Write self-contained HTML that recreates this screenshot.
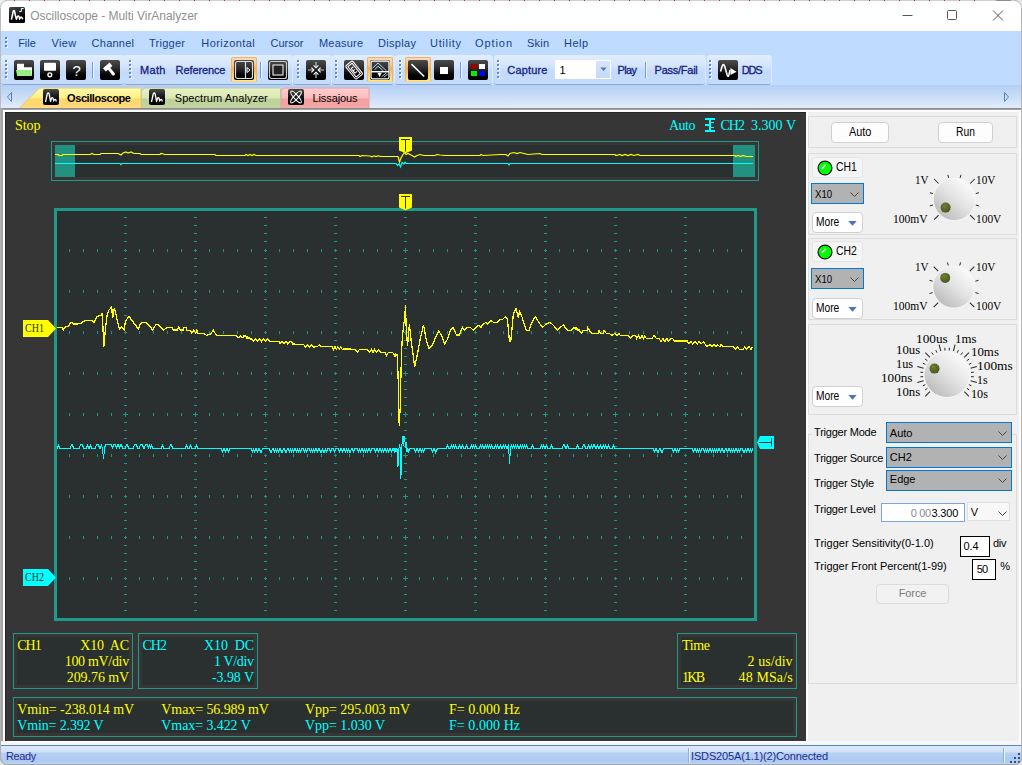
<!DOCTYPE html>
<html><head><meta charset="utf-8"><title>Oscilloscope - Multi VirAnalyzer</title>
<style>
html,body{margin:0;padding:0;background:#fff;}
body{width:1022px;height:765px;overflow:hidden;position:relative;font-family:"Liberation Sans",sans-serif;}
.b{position:absolute;display:block;}
.t{position:absolute;white-space:pre;display:block;}
svg{overflow:visible;}
</style></head><body>
<div class="b" style="left:0px;top:0px;width:1022px;height:765px;background:#fff;"></div>
<div class="b" style="left:0px;top:0px;width:1022px;height:1px;background:#cfcfcf;"></div>
<div class="b" style="left:996px;top:0px;width:15px;height:1px;background:#8e8e8e;"></div>
<div class="b" style="left:14px;top:0px;width:1px;height:1px;background:#e02020;"></div>
<div class="b" style="left:29px;top:0px;width:1px;height:1px;background:#e02020;"></div>
<div class="b" style="left:44px;top:0px;width:1px;height:1px;background:#e02020;"></div>
<div class="b" style="left:59px;top:0px;width:1px;height:1px;background:#e02020;"></div>
<div class="b" style="left:74px;top:0px;width:1px;height:1px;background:#e02020;"></div>
<div class="b" style="left:89px;top:0px;width:1px;height:1px;background:#e02020;"></div>
<div class="b" style="left:104px;top:0px;width:1px;height:1px;background:#e02020;"></div>
<div class="b" style="left:119px;top:0px;width:1px;height:1px;background:#e02020;"></div>
<div class="b" style="left:134px;top:0px;width:1px;height:1px;background:#e02020;"></div>
<div class="b" style="left:149px;top:0px;width:1px;height:1px;background:#e02020;"></div>
<div class="b" style="left:164px;top:0px;width:1px;height:1px;background:#e02020;"></div>
<div class="b" style="left:179px;top:0px;width:1px;height:1px;background:#e02020;"></div>
<div class="b" style="left:194px;top:0px;width:1px;height:1px;background:#e02020;"></div>
<div class="b" style="left:209px;top:0px;width:1px;height:1px;background:#e02020;"></div>
<div class="b" style="left:224px;top:0px;width:1px;height:1px;background:#e02020;"></div>
<div class="b" style="left:239px;top:0px;width:1px;height:1px;background:#e02020;"></div>
<div class="b" style="left:254px;top:0px;width:1px;height:1px;background:#e02020;"></div>
<div class="b" style="left:269px;top:0px;width:1px;height:1px;background:#e02020;"></div>
<div class="b" style="left:284px;top:0px;width:1px;height:1px;background:#e02020;"></div>
<div class="b" style="left:299px;top:0px;width:1px;height:1px;background:#e02020;"></div>
<div class="b" style="left:314px;top:0px;width:1px;height:1px;background:#e02020;"></div>
<div class="b" style="left:329px;top:0px;width:1px;height:1px;background:#e02020;"></div>
<div class="b" style="left:344px;top:0px;width:1px;height:1px;background:#e02020;"></div>
<div class="b" style="left:359px;top:0px;width:1px;height:1px;background:#e02020;"></div>
<div class="b" style="left:374px;top:0px;width:1px;height:1px;background:#e02020;"></div>
<div class="b" style="left:389px;top:0px;width:1px;height:1px;background:#e02020;"></div>
<div class="b" style="left:404px;top:0px;width:1px;height:1px;background:#e02020;"></div>
<div class="b" style="left:419px;top:0px;width:1px;height:1px;background:#e02020;"></div>
<div class="b" style="left:434px;top:0px;width:1px;height:1px;background:#e02020;"></div>
<div class="b" style="left:449px;top:0px;width:1px;height:1px;background:#e02020;"></div>
<div class="b" style="left:464px;top:0px;width:1px;height:1px;background:#e02020;"></div>
<div class="b" style="left:479px;top:0px;width:1px;height:1px;background:#e02020;"></div>
<div class="b" style="left:494px;top:0px;width:1px;height:1px;background:#e02020;"></div>
<div class="b" style="left:509px;top:0px;width:1px;height:1px;background:#e02020;"></div>
<div class="b" style="left:524px;top:0px;width:1px;height:1px;background:#e02020;"></div>
<div class="b" style="left:539px;top:0px;width:1px;height:1px;background:#e02020;"></div>
<div class="b" style="left:554px;top:0px;width:1px;height:1px;background:#e02020;"></div>
<div class="b" style="left:569px;top:0px;width:1px;height:1px;background:#e02020;"></div>
<div class="b" style="left:584px;top:0px;width:1px;height:1px;background:#e02020;"></div>
<div class="b" style="left:599px;top:0px;width:1px;height:1px;background:#e02020;"></div>
<div class="b" style="left:614px;top:0px;width:1px;height:1px;background:#e02020;"></div>
<div class="b" style="left:629px;top:0px;width:1px;height:1px;background:#e02020;"></div>
<div class="b" style="left:644px;top:0px;width:1px;height:1px;background:#e02020;"></div>
<div class="b" style="left:659px;top:0px;width:1px;height:1px;background:#e02020;"></div>
<div class="b" style="left:674px;top:0px;width:1px;height:1px;background:#e02020;"></div>
<div class="b" style="left:689px;top:0px;width:1px;height:1px;background:#e02020;"></div>
<div class="b" style="left:704px;top:0px;width:1px;height:1px;background:#e02020;"></div>
<div class="b" style="left:719px;top:0px;width:1px;height:1px;background:#e02020;"></div>
<div class="b" style="left:734px;top:0px;width:1px;height:1px;background:#e02020;"></div>
<div class="b" style="left:749px;top:0px;width:1px;height:1px;background:#e02020;"></div>
<div class="b" style="left:764px;top:0px;width:1px;height:1px;background:#e02020;"></div>
<div class="b" style="left:779px;top:0px;width:1px;height:1px;background:#e02020;"></div>
<div class="b" style="left:794px;top:0px;width:1px;height:1px;background:#e02020;"></div>
<div class="b" style="left:809px;top:0px;width:1px;height:1px;background:#e02020;"></div>
<div class="b" style="left:824px;top:0px;width:1px;height:1px;background:#e02020;"></div>
<div class="b" style="left:839px;top:0px;width:1px;height:1px;background:#e02020;"></div>
<div class="b" style="left:854px;top:0px;width:1px;height:1px;background:#e02020;"></div>
<div class="b" style="left:869px;top:0px;width:1px;height:1px;background:#e02020;"></div>
<div class="b" style="left:884px;top:0px;width:1px;height:1px;background:#e02020;"></div>
<div class="b" style="left:899px;top:0px;width:1px;height:1px;background:#e02020;"></div>
<div class="b" style="left:914px;top:0px;width:1px;height:1px;background:#e02020;"></div>
<div class="b" style="left:929px;top:0px;width:1px;height:1px;background:#e02020;"></div>
<div class="b" style="left:944px;top:0px;width:1px;height:1px;background:#e02020;"></div>
<div class="b" style="left:959px;top:0px;width:1px;height:1px;background:#e02020;"></div>
<div class="b" style="left:974px;top:0px;width:1px;height:1px;background:#e02020;"></div>
<div class="b" style="left:9px;top:7px;width:16px;height:16px;border-radius:1.5px;background:linear-gradient(160deg,#4a4a4a,#1a1a1a 45%,#000 70%);"></div>
<svg class="b" style="left:9px;top:7px" width="16" height="16" viewBox="0 0 16 16"><path d="M2.4 12.6 L3.4 8 L4.3 4 Q4.9 2.8 5.5 4 L6.4 8.5 L7.4 12.2 L8.4 9.4 Q9.3 8.3 10 9.6 L10.6 12.2 L11.5 10.5 Q12.2 9.6 12.9 10.6 L13.7 12.3" fill="none" stroke="#fff" stroke-width="1.5" stroke-linejoin="round"/><path d="M10.2 4.6 H12.3 V1.5 H14.6" fill="none" stroke="#fff" stroke-width="1"/></svg>
<span class="t" style="left:30.30px;top:9px;font-size:12px;line-height:14px;color:#909090;font-family:'Liberation Sans', sans-serif;font-weight:400;letter-spacing:-0.032px;">Oscilloscope - Multi VirAnalyzer</span>
<svg class="b" style="left:896px;top:6px" width="120" height="20" viewBox="0 0 120 20"><path d="M6.5 9.5 H16.5" stroke="#555" stroke-width="1" fill="none"/><rect x="51.5" y="4.5" width="9" height="9" rx="1" stroke="#555" stroke-width="1" fill="none"/><path d="M97 4.5 L107 14.5 M107 4.5 L97 14.5" stroke="#555" stroke-width="1" fill="none"/></svg>
<div class="b" style="left:0px;top:31px;width:1022px;height:24px;background:#bfdbff;"></div>
<div class="b" style="left:6px;top:38px;width:2px;height:2px;background:#f4f8ff;"></div>
<div class="b" style="left:5px;top:37px;width:2px;height:2px;background:#5588d0;"></div>
<div class="b" style="left:6px;top:42px;width:2px;height:2px;background:#f4f8ff;"></div>
<div class="b" style="left:5px;top:41px;width:2px;height:2px;background:#5588d0;"></div>
<div class="b" style="left:6px;top:46px;width:2px;height:2px;background:#f4f8ff;"></div>
<div class="b" style="left:5px;top:45px;width:2px;height:2px;background:#5588d0;"></div>
<span class="t" style="left:18.20px;top:37px;font-size:11px;line-height:13px;color:#15428b;font-family:'Liberation Sans', sans-serif;font-weight:400;letter-spacing:-0.040px;">File</span>
<span class="t" style="left:51.40px;top:37px;font-size:11px;line-height:13px;color:#15428b;font-family:'Liberation Sans', sans-serif;font-weight:400;letter-spacing:0.409px;">View</span>
<span class="t" style="left:91.60px;top:37px;font-size:11px;line-height:13px;color:#15428b;font-family:'Liberation Sans', sans-serif;font-weight:400;letter-spacing:0.238px;">Channel</span>
<span class="t" style="left:149.00px;top:37px;font-size:11px;line-height:13px;color:#15428b;font-family:'Liberation Sans', sans-serif;font-weight:400;letter-spacing:0.262px;">Trigger</span>
<span class="t" style="left:201.30px;top:37px;font-size:11px;line-height:13px;color:#15428b;font-family:'Liberation Sans', sans-serif;font-weight:400;letter-spacing:0.442px;">Horizontal</span>
<span class="t" style="left:270.60px;top:37px;font-size:11px;line-height:13px;color:#15428b;font-family:'Liberation Sans', sans-serif;font-weight:400;letter-spacing:-0.022px;">Cursor</span>
<span class="t" style="left:319.00px;top:37px;font-size:11px;line-height:13px;color:#15428b;font-family:'Liberation Sans', sans-serif;font-weight:400;letter-spacing:0.200px;">Measure</span>
<span class="t" style="left:378.00px;top:37px;font-size:11px;line-height:13px;color:#15428b;font-family:'Liberation Sans', sans-serif;font-weight:400;letter-spacing:0.322px;">Display</span>
<span class="t" style="left:430.00px;top:37px;font-size:11px;line-height:13px;color:#15428b;font-family:'Liberation Sans', sans-serif;font-weight:400;letter-spacing:0.686px;">Utility</span>
<span class="t" style="left:475.00px;top:37px;font-size:11px;line-height:13px;color:#15428b;font-family:'Liberation Sans', sans-serif;font-weight:400;letter-spacing:0.919px;">Option</span>
<span class="t" style="left:527.00px;top:37px;font-size:11px;line-height:13px;color:#15428b;font-family:'Liberation Sans', sans-serif;font-weight:400;letter-spacing:0.202px;">Skin</span>
<span class="t" style="left:564.00px;top:37px;font-size:11px;line-height:13px;color:#15428b;font-family:'Liberation Sans', sans-serif;font-weight:400;letter-spacing:0.458px;">Help</span>
<div class="b" style="left:0px;top:55px;width:1022px;height:30px;background:#bfdbff;"></div>
<div class="b" style="left:1px;top:55px;width:123px;height:29px;background:linear-gradient(#e3eefd,#d3e4fb 38%,#c4dafa 58%,#c6dcfb);border-radius:3px 3px 3px 3px;border-bottom:1px solid #86a9d8;box-shadow:1px 0 0 #dbe9fc;"></div>
<div class="b" style="left:6px;top:61px;width:2px;height:2px;background:#fff;"></div>
<div class="b" style="left:5px;top:60px;width:2px;height:2px;background:#5b8ad6;"></div>
<div class="b" style="left:6px;top:65px;width:2px;height:2px;background:#fff;"></div>
<div class="b" style="left:5px;top:64px;width:2px;height:2px;background:#5b8ad6;"></div>
<div class="b" style="left:6px;top:69px;width:2px;height:2px;background:#fff;"></div>
<div class="b" style="left:5px;top:68px;width:2px;height:2px;background:#5b8ad6;"></div>
<div class="b" style="left:6px;top:73px;width:2px;height:2px;background:#fff;"></div>
<div class="b" style="left:5px;top:72px;width:2px;height:2px;background:#5b8ad6;"></div>
<div class="b" style="left:6px;top:77px;width:2px;height:2px;background:#fff;"></div>
<div class="b" style="left:5px;top:76px;width:2px;height:2px;background:#5b8ad6;"></div>
<div class="b" style="left:124px;top:55px;width:168px;height:29px;background:linear-gradient(#e3eefd,#d3e4fb 38%,#c4dafa 58%,#c6dcfb);border-radius:3px 3px 3px 3px;border-bottom:1px solid #86a9d8;box-shadow:1px 0 0 #dbe9fc;"></div>
<div class="b" style="left:130px;top:61px;width:2px;height:2px;background:#fff;"></div>
<div class="b" style="left:129px;top:60px;width:2px;height:2px;background:#5b8ad6;"></div>
<div class="b" style="left:130px;top:65px;width:2px;height:2px;background:#fff;"></div>
<div class="b" style="left:129px;top:64px;width:2px;height:2px;background:#5b8ad6;"></div>
<div class="b" style="left:130px;top:69px;width:2px;height:2px;background:#fff;"></div>
<div class="b" style="left:129px;top:68px;width:2px;height:2px;background:#5b8ad6;"></div>
<div class="b" style="left:130px;top:73px;width:2px;height:2px;background:#fff;"></div>
<div class="b" style="left:129px;top:72px;width:2px;height:2px;background:#5b8ad6;"></div>
<div class="b" style="left:130px;top:77px;width:2px;height:2px;background:#fff;"></div>
<div class="b" style="left:129px;top:76px;width:2px;height:2px;background:#5b8ad6;"></div>
<div class="b" style="left:293px;top:55px;width:38px;height:29px;background:linear-gradient(#e3eefd,#d3e4fb 38%,#c4dafa 58%,#c6dcfb);border-radius:3px 3px 3px 3px;border-bottom:1px solid #86a9d8;box-shadow:1px 0 0 #dbe9fc;"></div>
<div class="b" style="left:298px;top:61px;width:2px;height:2px;background:#fff;"></div>
<div class="b" style="left:297px;top:60px;width:2px;height:2px;background:#5b8ad6;"></div>
<div class="b" style="left:298px;top:65px;width:2px;height:2px;background:#fff;"></div>
<div class="b" style="left:297px;top:64px;width:2px;height:2px;background:#5b8ad6;"></div>
<div class="b" style="left:298px;top:69px;width:2px;height:2px;background:#fff;"></div>
<div class="b" style="left:297px;top:68px;width:2px;height:2px;background:#5b8ad6;"></div>
<div class="b" style="left:298px;top:73px;width:2px;height:2px;background:#fff;"></div>
<div class="b" style="left:297px;top:72px;width:2px;height:2px;background:#5b8ad6;"></div>
<div class="b" style="left:298px;top:77px;width:2px;height:2px;background:#fff;"></div>
<div class="b" style="left:297px;top:76px;width:2px;height:2px;background:#5b8ad6;"></div>
<div class="b" style="left:332px;top:55px;width:62px;height:29px;background:linear-gradient(#e3eefd,#d3e4fb 38%,#c4dafa 58%,#c6dcfb);border-radius:3px 3px 3px 3px;border-bottom:1px solid #86a9d8;box-shadow:1px 0 0 #dbe9fc;"></div>
<div class="b" style="left:336px;top:61px;width:2px;height:2px;background:#fff;"></div>
<div class="b" style="left:335px;top:60px;width:2px;height:2px;background:#5b8ad6;"></div>
<div class="b" style="left:336px;top:65px;width:2px;height:2px;background:#fff;"></div>
<div class="b" style="left:335px;top:64px;width:2px;height:2px;background:#5b8ad6;"></div>
<div class="b" style="left:336px;top:69px;width:2px;height:2px;background:#fff;"></div>
<div class="b" style="left:335px;top:68px;width:2px;height:2px;background:#5b8ad6;"></div>
<div class="b" style="left:336px;top:73px;width:2px;height:2px;background:#fff;"></div>
<div class="b" style="left:335px;top:72px;width:2px;height:2px;background:#5b8ad6;"></div>
<div class="b" style="left:336px;top:77px;width:2px;height:2px;background:#fff;"></div>
<div class="b" style="left:335px;top:76px;width:2px;height:2px;background:#5b8ad6;"></div>
<div class="b" style="left:395px;top:55px;width:97px;height:29px;background:linear-gradient(#e3eefd,#d3e4fb 38%,#c4dafa 58%,#c6dcfb);border-radius:3px 3px 3px 3px;border-bottom:1px solid #86a9d8;box-shadow:1px 0 0 #dbe9fc;"></div>
<div class="b" style="left:400px;top:61px;width:2px;height:2px;background:#fff;"></div>
<div class="b" style="left:399px;top:60px;width:2px;height:2px;background:#5b8ad6;"></div>
<div class="b" style="left:400px;top:65px;width:2px;height:2px;background:#fff;"></div>
<div class="b" style="left:399px;top:64px;width:2px;height:2px;background:#5b8ad6;"></div>
<div class="b" style="left:400px;top:69px;width:2px;height:2px;background:#fff;"></div>
<div class="b" style="left:399px;top:68px;width:2px;height:2px;background:#5b8ad6;"></div>
<div class="b" style="left:400px;top:73px;width:2px;height:2px;background:#fff;"></div>
<div class="b" style="left:399px;top:72px;width:2px;height:2px;background:#5b8ad6;"></div>
<div class="b" style="left:400px;top:77px;width:2px;height:2px;background:#fff;"></div>
<div class="b" style="left:399px;top:76px;width:2px;height:2px;background:#5b8ad6;"></div>
<div class="b" style="left:494px;top:55px;width:211px;height:29px;background:linear-gradient(#e3eefd,#d3e4fb 38%,#c4dafa 58%,#c6dcfb);border-radius:3px 3px 3px 3px;border-bottom:1px solid #86a9d8;box-shadow:1px 0 0 #dbe9fc;"></div>
<div class="b" style="left:498px;top:61px;width:2px;height:2px;background:#fff;"></div>
<div class="b" style="left:497px;top:60px;width:2px;height:2px;background:#5b8ad6;"></div>
<div class="b" style="left:498px;top:65px;width:2px;height:2px;background:#fff;"></div>
<div class="b" style="left:497px;top:64px;width:2px;height:2px;background:#5b8ad6;"></div>
<div class="b" style="left:498px;top:69px;width:2px;height:2px;background:#fff;"></div>
<div class="b" style="left:497px;top:68px;width:2px;height:2px;background:#5b8ad6;"></div>
<div class="b" style="left:498px;top:73px;width:2px;height:2px;background:#fff;"></div>
<div class="b" style="left:497px;top:72px;width:2px;height:2px;background:#5b8ad6;"></div>
<div class="b" style="left:498px;top:77px;width:2px;height:2px;background:#fff;"></div>
<div class="b" style="left:497px;top:76px;width:2px;height:2px;background:#5b8ad6;"></div>
<div class="b" style="left:707px;top:55px;width:64px;height:29px;background:linear-gradient(#e3eefd,#d3e4fb 38%,#c4dafa 58%,#c6dcfb);border-radius:3px 3px 3px 3px;border-bottom:1px solid #86a9d8;box-shadow:1px 0 0 #dbe9fc;"></div>
<div class="b" style="left:710px;top:61px;width:2px;height:2px;background:#fff;"></div>
<div class="b" style="left:709px;top:60px;width:2px;height:2px;background:#5b8ad6;"></div>
<div class="b" style="left:710px;top:65px;width:2px;height:2px;background:#fff;"></div>
<div class="b" style="left:709px;top:64px;width:2px;height:2px;background:#5b8ad6;"></div>
<div class="b" style="left:710px;top:69px;width:2px;height:2px;background:#fff;"></div>
<div class="b" style="left:709px;top:68px;width:2px;height:2px;background:#5b8ad6;"></div>
<div class="b" style="left:710px;top:73px;width:2px;height:2px;background:#fff;"></div>
<div class="b" style="left:709px;top:72px;width:2px;height:2px;background:#5b8ad6;"></div>
<div class="b" style="left:710px;top:77px;width:2px;height:2px;background:#fff;"></div>
<div class="b" style="left:709px;top:76px;width:2px;height:2px;background:#5b8ad6;"></div>
<div class="b" style="left:14px;top:60px;width:20px;height:20px;border-radius:2px;background:linear-gradient(#4c4c4c,#2c2c2c 40%,#000 78%);"></div>
<div class="b" style="left:40px;top:60px;width:20px;height:20px;border-radius:2px;background:linear-gradient(#4c4c4c,#2c2c2c 40%,#000 78%);"></div>
<div class="b" style="left:66px;top:60px;width:20px;height:20px;border-radius:2px;background:linear-gradient(#4c4c4c,#2c2c2c 40%,#000 78%);"></div>
<div class="b" style="left:92px;top:62px;width:1px;height:16px;background:#6f9be0;"></div><div class="b" style="left:93px;top:62px;width:1px;height:16px;background:#f4f8fe;"></div>
<div class="b" style="left:100px;top:60px;width:20px;height:20px;border-radius:2px;background:linear-gradient(#4c4c4c,#2c2c2c 40%,#000 78%);"></div>
<svg class="b" style="left:14px;top:60px" width="20" height="20" viewBox="0 0 20 20"><path d="M3 3.8 H10 V7.2 H18 V15 H3 Z" fill="#fff"/><path d="M2 10 H17 L18 16 H3.2 Z" fill="#96f080"/></svg>
<svg class="b" style="left:40px;top:60px" width="20" height="20" viewBox="0 0 20 20"><rect x="4" y="2.8" width="12" height="8" rx="0.8" fill="#fff"/><circle cx="9.8" cy="14.8" r="1.9" fill="none" stroke="#fff" stroke-width="1.4"/></svg>
<span class="t" style="left:72.60px;top:62px;font-size:15px;line-height:18px;color:#fff;font-family:'Liberation Sans', sans-serif;font-weight:400;letter-spacing:0.000px;">?</span>
<svg class="b" style="left:100px;top:60px" width="20" height="20" viewBox="0 0 20 20"><path d="M4.4 9.9 L11 4.3" stroke="#fff" stroke-width="4.4" fill="none"/><path d="M8.2 7.6 L13.4 14" stroke="#fff" stroke-width="3" stroke-linecap="round" fill="none"/></svg>
<span class="t" style="left:139.90px;top:64px;font-size:11px;line-height:13px;color:#161c80;font-family:'Liberation Sans', sans-serif;font-weight:400;letter-spacing:0.382px;-webkit-text-stroke:0.3px #161c80;">Math</span>
<span class="t" style="left:175.60px;top:64px;font-size:11px;line-height:13px;color:#161c80;font-family:'Liberation Sans', sans-serif;font-weight:400;letter-spacing:-0.107px;-webkit-text-stroke:0.3px #161c80;">Reference</span>
<div class="b" style="left:231.4px;top:57px;width:25.2px;height:25px;border:1px solid #eeb26a;border-bottom-color:#ffd86a;background:linear-gradient(#fbdcb6,#fcc27a 35%,#fdb040 45%,#fed267 75%,#ffe694);border-radius:2px;box-sizing:border-box;"></div><div class="b" style="left:234px;top:60px;width:20px;height:20px;border-radius:2px;background:linear-gradient(#4c4c4c,#2c2c2c 40%,#000 78%);"></div>
<svg class="b" style="left:234px;top:60px" width="20" height="20" viewBox="0 0 20 20"><rect x="1.5" y="1.5" width="17" height="17" rx="2" fill="none" stroke="#ddd" stroke-width="1.2"/><path d="M11.5 2 V18" stroke="#ddd" stroke-width="1.2"/><path d="M13 7.5 L16 10 L13 12.5 Z" fill="none" stroke="#fff" stroke-width="1"/></svg>
<div class="b" style="left:260px;top:62px;width:1px;height:16px;background:#6f9be0;"></div><div class="b" style="left:261px;top:62px;width:1px;height:16px;background:#f4f8fe;"></div>
<div class="b" style="left:268px;top:60px;width:20px;height:20px;border-radius:2px;background:linear-gradient(#4c4c4c,#2c2c2c 40%,#000 78%);"></div>
<svg class="b" style="left:268px;top:60px" width="20" height="20" viewBox="0 0 20 20"><rect x="1.5" y="1.5" width="17" height="17" rx="2" fill="none" stroke="#ccc" stroke-width="1.2"/><rect x="5" y="5" width="10" height="10" fill="#222" stroke="#ddd" stroke-width="1.2"/></svg>
<div class="b" style="left:306px;top:60px;width:20px;height:20px;border-radius:2px;background:linear-gradient(#4c4c4c,#2c2c2c 40%,#000 78%);"></div>
<svg class="b" style="left:306px;top:60px" width="20" height="20" viewBox="0 0 20 20"><g stroke="#c8c8c8" stroke-width="1.2" fill="none"><path d="M10 2 V7 M10 18 V13 M2 10 H7 M18 10 H13"/></g><g stroke="#fff" stroke-width="1.1" fill="none"><path d="M7.6 5.4 L10 7.8 L12.4 5.4 M7.6 14.6 L10 12.2 L12.4 14.6 M5.4 7.6 L7.8 10 L5.4 12.4 M14.6 7.6 L12.2 10 L14.6 12.4"/></g></svg>
<div class="b" style="left:344px;top:60px;width:20px;height:20px;border-radius:2px;background:linear-gradient(#4c4c4c,#2c2c2c 40%,#000 78%);"></div>
<div class="b" style="left:367.4px;top:57px;width:25.2px;height:25px;border:1px solid #eeb26a;border-bottom-color:#ffd86a;background:linear-gradient(#fbdcb6,#fcc27a 35%,#fdb040 45%,#fed267 75%,#ffe694);border-radius:2px;box-sizing:border-box;"></div><div class="b" style="left:370px;top:60px;width:20px;height:20px;border-radius:2px;background:linear-gradient(#4c4c4c,#2c2c2c 40%,#000 78%);"></div>
<svg class="b" style="left:344px;top:60px" width="20" height="20" viewBox="0 0 20 20"><g stroke="#fff" stroke-width="1" fill="none" transform="rotate(-39 10.1 10.1)"><rect x="5.6" y="1.6" width="9" height="17" rx="1.3"/><rect x="7.4" y="3.5" width="5.4" height="13.2"/><path d="M8.8 7 H11.6 M8.8 10 H11.2 M8.8 13 H11.6 M8.8 7 V13"/></g></svg>
<svg class="b" style="left:370px;top:60px" width="20" height="20" viewBox="0 0 20 20"><rect x="1" y="1.2" width="18" height="17.6" rx="1.5" fill="none" stroke="#fff" stroke-width="1.3"/><path d="M1 11.7 H19" stroke="#fff" stroke-width="1.4"/><g stroke="#a8dcf4" stroke-width="1" fill="none"><path d="M2.5 8.2 L8 3 L16.5 10.8 M4.8 9.6 L8 6.2 L13.5 11"/><path d="M11.5 16.8 L16.5 12.8 M13.8 17.2 L17.6 14.2"/></g><path d="M7.4 12.8 H11.8 L9.6 17.2 Z" fill="#fff"/></svg>
<div class="b" style="left:405.4px;top:57px;width:25.2px;height:25px;border:1px solid #eeb26a;border-bottom-color:#ffd86a;background:linear-gradient(#fbdcb6,#fcc27a 35%,#fdb040 45%,#fed267 75%,#ffe694);border-radius:2px;box-sizing:border-box;"></div><div class="b" style="left:408px;top:60px;width:20px;height:20px;border-radius:2px;background:linear-gradient(#4c4c4c,#2c2c2c 40%,#000 78%);"></div>
<div class="b" style="left:434px;top:60px;width:20px;height:20px;border-radius:2px;background:linear-gradient(#4c4c4c,#2c2c2c 40%,#000 78%);"></div>
<div class="b" style="left:460px;top:62px;width:1px;height:16px;background:#6f9be0;"></div><div class="b" style="left:461px;top:62px;width:1px;height:16px;background:#f4f8fe;"></div>
<div class="b" style="left:468px;top:60px;width:20px;height:20px;border-radius:2px;background:linear-gradient(#4c4c4c,#2c2c2c 40%,#000 78%);"></div>
<svg class="b" style="left:408px;top:60px" width="20" height="20" viewBox="0 0 20 20"><path d="M3.5 4.1 L16.2 16.5" stroke="#fff" stroke-width="1.5"/></svg>
<div class="b" style="left:440px;top:66.5px;width:7.5px;height:7.5px;background:#fff;"></div>
<div class="b" style="left:471px;top:64px;width:6px;height:5px;background:#a00000;"></div>
<div class="b" style="left:479px;top:64px;width:6px;height:5px;background:#fff;"></div>
<div class="b" style="left:471px;top:71px;width:6px;height:5px;background:#00f000;"></div>
<div class="b" style="left:479px;top:71px;width:6px;height:5px;background:#0000ff;"></div>
<span class="t" style="left:507.30px;top:64px;font-size:11px;line-height:13px;color:#161c80;font-family:'Liberation Sans', sans-serif;font-weight:400;letter-spacing:0.177px;-webkit-text-stroke:0.3px #161c80;">Capture</span>
<div class="b" style="left:555px;top:60px;width:56px;height:19px;background:#fff;"></div>
<div class="b" style="left:596px;top:61px;width:13.6px;height:17px;background:linear-gradient(#d6e5fb,#c3d9f8);"></div>
<svg class="b" style="left:600px;top:67px" width="7" height="5"><path d="M0.3 0.5 H6.7 L3.5 4 Z" fill="#5577aa"/></svg>
<span class="t" style="left:559.50px;top:64px;font-size:11px;line-height:13px;color:#000;font-family:'Liberation Sans', sans-serif;font-weight:400;letter-spacing:0.000px;">1</span>
<span class="t" style="left:617.40px;top:64px;font-size:11px;line-height:13px;color:#161c80;font-family:'Liberation Sans', sans-serif;font-weight:400;letter-spacing:-0.598px;-webkit-text-stroke:0.3px #161c80;">Play</span>
<div class="b" style="left:645px;top:62px;width:1px;height:16px;background:#6f9be0;"></div><div class="b" style="left:646px;top:62px;width:1px;height:16px;background:#f4f8fe;"></div>
<span class="t" style="left:654.60px;top:64px;font-size:11px;line-height:13px;color:#161c80;font-family:'Liberation Sans', sans-serif;font-weight:400;letter-spacing:-0.254px;-webkit-text-stroke:0.3px #161c80;">Pass/Fail</span>
<div class="b" style="left:718px;top:60px;width:20px;height:20px;border-radius:2px;background:linear-gradient(#4c4c4c,#2c2c2c 40%,#000 78%);"></div>
<svg class="b" style="left:718px;top:60px" width="20" height="20" viewBox="0 0 20 20"><path d="M2.5 11.5 L4.2 6 Q5.5 3 6.8 6.5 L9.3 15.5 Q10.2 17.5 11 14.5 L12 10" fill="none" stroke="#fff" stroke-width="1.6"/><path d="M12.5 8 L18.5 11.8 L12.5 15 Z" fill="#fff"/></svg>
<span class="t" style="left:741.80px;top:64px;font-size:11px;line-height:13px;color:#161c80;font-family:'Liberation Sans', sans-serif;font-weight:400;letter-spacing:-1.210px;-webkit-text-stroke:0.3px #161c80;">DDS</span>
<div class="b" style="left:0px;top:85px;width:1022px;height:24px;background:linear-gradient(#b4cff4,#cfe0f8 60%,#e4eefc);"></div>
<svg class="b" style="left:6px;top:91px" width="8" height="12"><path d="M5.5 1.5 L1.5 6 L5.5 10.5 Z" fill="none" stroke="#5a7fc0" stroke-width="1"/></svg>
<svg class="b" style="left:1002px;top:91px" width="8" height="12"><path d="M2.5 1.5 L6.5 6 L2.5 10.5 Z" fill="none" stroke="#5a7fc0" stroke-width="1"/></svg>
<svg class="b" style="left:0;top:85px" width="400" height="24">
<defs><linearGradient id="ty" x1="0" y1="0" x2="0" y2="1"><stop offset="0" stop-color="#fffbb0"/><stop offset="0.45" stop-color="#fff08a"/><stop offset="0.55" stop-color="#ffd866"/><stop offset="1" stop-color="#ffd884"/></linearGradient>
<linearGradient id="tg" x1="0" y1="0" x2="0" y2="1"><stop offset="0" stop-color="#e9f2c8"/><stop offset="0.45" stop-color="#dbe8b4"/><stop offset="0.55" stop-color="#bdd198"/><stop offset="1" stop-color="#c3d5a2"/></linearGradient>
<linearGradient id="tp" x1="0" y1="0" x2="0" y2="1"><stop offset="0" stop-color="#ffd0d0"/><stop offset="0.45" stop-color="#fbbcbc"/><stop offset="0.55" stop-color="#f2a0a0"/><stop offset="1" stop-color="#f4a8a8"/></linearGradient></defs>
<path d="M281 24 V6 L284 3 H369 V24 Z" fill="url(#tp)" stroke="#e8a0a0" stroke-width="1"/>
<path d="M141.500 24 V6 L144.500 3 H280.500 V24 Z" fill="url(#tg)" stroke="#b9c9a0" stroke-width="1"/>
<path d="M18.500 24 L39 3.500 Q39.500 3 41 3 H141 V24 Z" fill="url(#ty)" stroke="#e8c878" stroke-width="1"/>
</svg>
<div class="b" style="left:43px;top:89px;width:15.7px;height:15.7px;border-radius:2px;background:linear-gradient(#484848,#1a1a1a 45%,#000 75%);"></div><svg class="b" style="left:43px;top:89px" width="16" height="16" viewBox="0 0 16 16"><path d="M2.5 13 L4.2 5 Q5.2 3 6.2 5 L7.5 12.5 L8.6 9 Q9.4 8 10.1 9.3 L10.7 12 L11.6 10.7 Q12.4 10 12.9 11.1 L13.3 12.5" fill="none" stroke="#fff" stroke-width="1.3" stroke-linejoin="round"/></svg>
<div class="b" style="left:149px;top:89px;width:15.7px;height:15.7px;border-radius:2px;background:linear-gradient(#484848,#1a1a1a 45%,#000 75%);"></div><svg class="b" style="left:149px;top:89px" width="16" height="16" viewBox="0 0 16 16"><path d="M2.5 13 L4.2 5 Q5.2 3 6.2 5 L7.5 12.5 L8.6 9 Q9.4 8 10.1 9.3 L10.7 12 L11.6 10.7 Q12.4 10 12.9 11.1 L13.3 12.5" fill="none" stroke="#fff" stroke-width="1.3" stroke-linejoin="round"/></svg>
<div class="b" style="left:288px;top:89px;width:15.7px;height:15.7px;border-radius:2px;background:linear-gradient(#484848,#1a1a1a 45%,#000 75%);"></div><svg class="b" style="left:288px;top:89px" width="16" height="16" viewBox="0 0 16 16"><g fill="none" stroke="#fff" stroke-width="1.1"><ellipse cx="8" cy="8" rx="7.6" ry="2.1" transform="rotate(48 8 8)"/><ellipse cx="8" cy="8" rx="7.6" ry="2.1" transform="rotate(-48 8 8)"/></g></svg>
<span class="t" style="left:67.10px;top:92px;font-size:11px;line-height:13px;color:#000;font-family:'Liberation Sans', sans-serif;font-weight:700;letter-spacing:-0.425px;">Oscilloscope</span>
<span class="t" style="left:174.80px;top:92px;font-size:11px;line-height:13px;color:#000;font-family:'Liberation Sans', sans-serif;font-weight:400;letter-spacing:0.042px;">Spectrum Analyzer</span>
<span class="t" style="left:312.50px;top:92px;font-size:11px;line-height:13px;color:#000;font-family:'Liberation Sans', sans-serif;font-weight:400;letter-spacing:-0.107px;">Lissajous</span>
<div class="b" style="left:1px;top:108px;width:1021px;height:1px;background:#8c8c8c;"></div>
<div class="b" style="left:1px;top:109px;width:1021px;height:1px;background:#a2a2a2;"></div>
<div class="b" style="left:3px;top:110px;width:1018px;height:2px;background:#fdfdfd;"></div>
<div class="b" style="left:0px;top:8px;width:1px;height:757px;background:#bcbcbc;"></div>
<div class="b" style="left:1px;top:108px;width:2px;height:633px;background:#a4a4a4;"></div>
<div class="b" style="left:0px;top:108px;width:1px;height:650px;background:#b0b0b0;"></div>
<div class="b" style="left:3px;top:110px;width:2px;height:633px;background:#fdfdfd;"></div>
<svg class="b" style="left:0;top:0" width="8" height="8"><path d="M0 0 H8 A8 8 0 0 0 0 8 Z" fill="#ececec"/><path d="M7.5 0.5 A7 7 0 0 0 0.5 7.5" fill="none" stroke="#bdbdbd" stroke-width="1"/></svg>
<svg class="b" style="left:1014px;top:0" width="8" height="8"><path d="M8 0 H0 A8 8 0 0 1 8 8 Z" fill="#e6e6e6"/><path d="M0.5 0.5 A7 7 0 0 1 7.5 7.5" fill="none" stroke="#b4b4b4" stroke-width="1"/></svg>
<div class="b" style="left:5px;top:112px;width:801px;height:629px;background:#363636;"></div>
<div class="b" style="left:5px;top:112px;width:801px;height:1px;background:#262626;"></div>
<div class="b" style="left:5px;top:112px;width:1px;height:629px;background:#262626;"></div>
<div class="b" style="left:806px;top:110px;width:2px;height:634px;background:#fdfdfd;"></div>
<span class="t" style="left:15.00px;top:117px;font-size:14px;line-height:17px;color:#ffff00;font-family:'Liberation Serif', serif;font-weight:400;letter-spacing:-0.059px;">Stop</span>
<span class="t" style="left:669.00px;top:117px;font-size:14px;line-height:17px;color:#00ffff;font-family:'Liberation Serif', serif;font-weight:400;letter-spacing:-0.500px;">Auto</span>
<span class="t" style="left:720.50px;top:117px;font-size:14px;line-height:17px;color:#00ffff;font-family:'Liberation Serif', serif;font-weight:400;letter-spacing:-0.973px;">CH2</span>
<span class="t" style="left:751.00px;top:117px;font-size:14px;line-height:17px;color:#00ffff;font-family:'Liberation Serif', serif;font-weight:400;letter-spacing:0.024px;">3.300 V</span>
<div class="b" style="left:705px;top:118px;width:9.5px;height:2px;background:#00ffff;"></div>
<div class="b" style="left:705px;top:130px;width:9.5px;height:2px;background:#00ffff;"></div>
<div class="b" style="left:708.5px;top:118px;width:2.5px;height:14px;background:#00ffff;"></div>
<div class="b" style="left:705px;top:124px;width:4px;height:2px;background:#00ffff;"></div>
<div class="b" style="left:711px;top:121.5px;width:3.3px;height:1.6px;background:#00ffff;"></div>
<div class="b" style="left:711px;top:126.5px;width:3.3px;height:1.6px;background:#00ffff;"></div>
<div class="b" style="left:51px;top:141px;width:708px;height:40px;border:1px solid #1f9a8a;box-sizing:border-box;"></div>
<div class="b" style="left:55px;top:145px;width:700px;height:32px;background:#2a2f30;"></div>
<div class="b" style="left:55px;top:145px;width:20px;height:32px;background:#22917f;"></div>
<div class="b" style="left:733px;top:145px;width:22px;height:32px;background:#22917f;"></div>
<div class="b" style="left:54px;top:208px;width:703px;height:413px;background:#2a2f30;border:3px solid #1f9a8a;box-sizing:border-box;"></div>
<svg class="b" style="left:0;top:0" width="1022" height="765" shape-rendering="crispEdges"><g stroke="#1f9686" fill="none"><path d="M69 250.5 H750" stroke-width="3" stroke-dasharray="1 13"/><path d="M69 291.5 H750" stroke-width="3" stroke-dasharray="1 13"/><path d="M69 332.5 H750" stroke-width="3" stroke-dasharray="1 13"/><path d="M69 373.5 H750" stroke-width="3" stroke-dasharray="1 13"/><path d="M69 414.5 H750" stroke-width="3" stroke-dasharray="1 13"/><path d="M69 455.5 H750" stroke-width="3" stroke-dasharray="1 13"/><path d="M69 496.5 H750" stroke-width="3" stroke-dasharray="1 13"/><path d="M69 537.5 H750" stroke-width="3" stroke-dasharray="1 13"/><path d="M69 578.5 H750" stroke-width="3" stroke-dasharray="1 13"/><path d="M124 217.5h3 M124 225.5h3 M124 233.5h3 M124 241.5h3 M124 250.5h3 M124 258.5h3 M124 266.5h3 M124 274.5h3 M124 282.5h3 M124 291.5h3 M124 299.5h3 M124 307.5h3 M124 315.5h3 M124 323.5h3 M124 332.5h3 M124 340.5h3 M124 348.5h3 M124 356.5h3 M124 364.5h3 M124 373.5h3 M124 381.5h3 M124 389.5h3 M124 397.5h3 M124 405.5h3 M124 414.5h3 M124 422.5h3 M124 430.5h3 M124 438.5h3 M124 446.5h3 M124 455.5h3 M124 463.5h3 M124 471.5h3 M124 479.5h3 M124 487.5h3 M124 496.5h3 M124 504.5h3 M124 512.5h3 M124 520.5h3 M124 528.5h3 M124 537.5h3 M124 545.5h3 M124 553.5h3 M124 561.5h3 M124 569.5h3 M124 578.5h3 M124 586.5h3 M124 594.5h3 M124 602.5h3 M124 610.5h3 M194 217.5h3 M194 225.5h3 M194 233.5h3 M194 241.5h3 M194 250.5h3 M194 258.5h3 M194 266.5h3 M194 274.5h3 M194 282.5h3 M194 291.5h3 M194 299.5h3 M194 307.5h3 M194 315.5h3 M194 323.5h3 M194 332.5h3 M194 340.5h3 M194 348.5h3 M194 356.5h3 M194 364.5h3 M194 373.5h3 M194 381.5h3 M194 389.5h3 M194 397.5h3 M194 405.5h3 M194 414.5h3 M194 422.5h3 M194 430.5h3 M194 438.5h3 M194 446.5h3 M194 455.5h3 M194 463.5h3 M194 471.5h3 M194 479.5h3 M194 487.5h3 M194 496.5h3 M194 504.5h3 M194 512.5h3 M194 520.5h3 M194 528.5h3 M194 537.5h3 M194 545.5h3 M194 553.5h3 M194 561.5h3 M194 569.5h3 M194 578.5h3 M194 586.5h3 M194 594.5h3 M194 602.5h3 M194 610.5h3 M264 217.5h3 M264 225.5h3 M264 233.5h3 M264 241.5h3 M264 250.5h3 M264 258.5h3 M264 266.5h3 M264 274.5h3 M264 282.5h3 M264 291.5h3 M264 299.5h3 M264 307.5h3 M264 315.5h3 M264 323.5h3 M264 332.5h3 M264 340.5h3 M264 348.5h3 M264 356.5h3 M264 364.5h3 M264 373.5h3 M264 381.5h3 M264 389.5h3 M264 397.5h3 M264 405.5h3 M264 414.5h3 M264 422.5h3 M264 430.5h3 M264 438.5h3 M264 446.5h3 M264 455.5h3 M264 463.5h3 M264 471.5h3 M264 479.5h3 M264 487.5h3 M264 496.5h3 M264 504.5h3 M264 512.5h3 M264 520.5h3 M264 528.5h3 M264 537.5h3 M264 545.5h3 M264 553.5h3 M264 561.5h3 M264 569.5h3 M264 578.5h3 M264 586.5h3 M264 594.5h3 M264 602.5h3 M264 610.5h3 M334 217.5h3 M334 225.5h3 M334 233.5h3 M334 241.5h3 M334 250.5h3 M334 258.5h3 M334 266.5h3 M334 274.5h3 M334 282.5h3 M334 291.5h3 M334 299.5h3 M334 307.5h3 M334 315.5h3 M334 323.5h3 M334 332.5h3 M334 340.5h3 M334 348.5h3 M334 356.5h3 M334 364.5h3 M334 373.5h3 M334 381.5h3 M334 389.5h3 M334 397.5h3 M334 405.5h3 M334 414.5h3 M334 422.5h3 M334 430.5h3 M334 438.5h3 M334 446.5h3 M334 455.5h3 M334 463.5h3 M334 471.5h3 M334 479.5h3 M334 487.5h3 M334 496.5h3 M334 504.5h3 M334 512.5h3 M334 520.5h3 M334 528.5h3 M334 537.5h3 M334 545.5h3 M334 553.5h3 M334 561.5h3 M334 569.5h3 M334 578.5h3 M334 586.5h3 M334 594.5h3 M334 602.5h3 M334 610.5h3 M404 217.5h3 M404 225.5h3 M404 233.5h3 M404 241.5h3 M404 250.5h3 M404 258.5h3 M404 266.5h3 M404 274.5h3 M404 282.5h3 M404 291.5h3 M404 299.5h3 M404 307.5h3 M404 315.5h3 M404 323.5h3 M404 332.5h3 M404 340.5h3 M404 348.5h3 M404 356.5h3 M404 364.5h3 M404 373.5h3 M404 381.5h3 M404 389.5h3 M404 397.5h3 M404 405.5h3 M404 414.5h3 M404 422.5h3 M404 430.5h3 M404 438.5h3 M404 446.5h3 M404 455.5h3 M404 463.5h3 M404 471.5h3 M404 479.5h3 M404 487.5h3 M404 496.5h3 M404 504.5h3 M404 512.5h3 M404 520.5h3 M404 528.5h3 M404 537.5h3 M404 545.5h3 M404 553.5h3 M404 561.5h3 M404 569.5h3 M404 578.5h3 M404 586.5h3 M404 594.5h3 M404 602.5h3 M404 610.5h3 M474 217.5h3 M474 225.5h3 M474 233.5h3 M474 241.5h3 M474 250.5h3 M474 258.5h3 M474 266.5h3 M474 274.5h3 M474 282.5h3 M474 291.5h3 M474 299.5h3 M474 307.5h3 M474 315.5h3 M474 323.5h3 M474 332.5h3 M474 340.5h3 M474 348.5h3 M474 356.5h3 M474 364.5h3 M474 373.5h3 M474 381.5h3 M474 389.5h3 M474 397.5h3 M474 405.5h3 M474 414.5h3 M474 422.5h3 M474 430.5h3 M474 438.5h3 M474 446.5h3 M474 455.5h3 M474 463.5h3 M474 471.5h3 M474 479.5h3 M474 487.5h3 M474 496.5h3 M474 504.5h3 M474 512.5h3 M474 520.5h3 M474 528.5h3 M474 537.5h3 M474 545.5h3 M474 553.5h3 M474 561.5h3 M474 569.5h3 M474 578.5h3 M474 586.5h3 M474 594.5h3 M474 602.5h3 M474 610.5h3 M544 217.5h3 M544 225.5h3 M544 233.5h3 M544 241.5h3 M544 250.5h3 M544 258.5h3 M544 266.5h3 M544 274.5h3 M544 282.5h3 M544 291.5h3 M544 299.5h3 M544 307.5h3 M544 315.5h3 M544 323.5h3 M544 332.5h3 M544 340.5h3 M544 348.5h3 M544 356.5h3 M544 364.5h3 M544 373.5h3 M544 381.5h3 M544 389.5h3 M544 397.5h3 M544 405.5h3 M544 414.5h3 M544 422.5h3 M544 430.5h3 M544 438.5h3 M544 446.5h3 M544 455.5h3 M544 463.5h3 M544 471.5h3 M544 479.5h3 M544 487.5h3 M544 496.5h3 M544 504.5h3 M544 512.5h3 M544 520.5h3 M544 528.5h3 M544 537.5h3 M544 545.5h3 M544 553.5h3 M544 561.5h3 M544 569.5h3 M544 578.5h3 M544 586.5h3 M544 594.5h3 M544 602.5h3 M544 610.5h3 M614 217.5h3 M614 225.5h3 M614 233.5h3 M614 241.5h3 M614 250.5h3 M614 258.5h3 M614 266.5h3 M614 274.5h3 M614 282.5h3 M614 291.5h3 M614 299.5h3 M614 307.5h3 M614 315.5h3 M614 323.5h3 M614 332.5h3 M614 340.5h3 M614 348.5h3 M614 356.5h3 M614 364.5h3 M614 373.5h3 M614 381.5h3 M614 389.5h3 M614 397.5h3 M614 405.5h3 M614 414.5h3 M614 422.5h3 M614 430.5h3 M614 438.5h3 M614 446.5h3 M614 455.5h3 M614 463.5h3 M614 471.5h3 M614 479.5h3 M614 487.5h3 M614 496.5h3 M614 504.5h3 M614 512.5h3 M614 520.5h3 M614 528.5h3 M614 537.5h3 M614 545.5h3 M614 553.5h3 M614 561.5h3 M614 569.5h3 M614 578.5h3 M614 586.5h3 M614 594.5h3 M614 602.5h3 M614 610.5h3 M684 217.5h3 M684 225.5h3 M684 233.5h3 M684 241.5h3 M684 250.5h3 M684 258.5h3 M684 266.5h3 M684 274.5h3 M684 282.5h3 M684 291.5h3 M684 299.5h3 M684 307.5h3 M684 315.5h3 M684 323.5h3 M684 332.5h3 M684 340.5h3 M684 348.5h3 M684 356.5h3 M684 364.5h3 M684 373.5h3 M684 381.5h3 M684 389.5h3 M684 397.5h3 M684 405.5h3 M684 414.5h3 M684 422.5h3 M684 430.5h3 M684 438.5h3 M684 446.5h3 M684 455.5h3 M684 463.5h3 M684 471.5h3 M684 479.5h3 M684 487.5h3 M684 496.5h3 M684 504.5h3 M684 512.5h3 M684 520.5h3 M684 528.5h3 M684 537.5h3 M684 545.5h3 M684 553.5h3 M684 561.5h3 M684 569.5h3 M684 578.5h3 M684 586.5h3 M684 594.5h3 M684 602.5h3 M684 610.5h3" stroke-width="1"/></g><g fill="#1f9686"><rect x="403" y="332" width="5" height="1"/><rect x="405" y="330" width="1" height="5"/><rect x="403" y="373" width="5" height="1"/><rect x="405" y="371" width="1" height="5"/><rect x="403" y="537" width="5" height="1"/><rect x="405" y="535" width="1" height="5"/><rect x="473" y="414" width="5" height="1"/><rect x="475" y="412" width="1" height="5"/><rect x="403" y="250" width="5" height="1"/><rect x="405" y="248" width="1" height="5"/><rect x="403" y="414" width="5" height="1"/><rect x="405" y="412" width="1" height="5"/><rect x="403" y="578" width="5" height="1"/><rect x="405" y="576" width="1" height="5"/><rect x="123" y="414" width="5" height="1"/><rect x="125" y="412" width="1" height="5"/><rect x="263" y="414" width="5" height="1"/><rect x="265" y="412" width="1" height="5"/><rect x="543" y="414" width="5" height="1"/><rect x="545" y="412" width="1" height="5"/><rect x="613" y="414" width="5" height="1"/><rect x="615" y="412" width="1" height="5"/><rect x="683" y="414" width="5" height="1"/><rect x="685" y="412" width="1" height="5"/><rect x="403" y="291" width="5" height="1"/><rect x="405" y="289" width="1" height="5"/><rect x="403" y="455" width="5" height="1"/><rect x="405" y="453" width="1" height="5"/><rect x="193" y="414" width="5" height="1"/><rect x="195" y="412" width="1" height="5"/><rect x="403" y="496" width="5" height="1"/><rect x="405" y="494" width="1" height="5"/><rect x="333" y="414" width="5" height="1"/><rect x="335" y="412" width="1" height="5"/></g><polyline fill="none" stroke="#00ffff" stroke-width="1" points="56.5,448.5 57.5,448.5 58.5,444.5 59.5,448.5 70.5,448.5 71.5,444.5 72.5,444.5 73.5,448.5 79.5,448.5 80.5,444.5 82.5,444.5 83.5,448.5 86.5,448.5 87.5,444.5 88.5,448.5 89.5,448.5 90.5,444.5 91.5,448.5 95.5,448.5 96.5,444.5 98.5,444.5 99.5,448.5 100.5,448.5 101.5,444.5 102.5,448.5 103.5,459.0 104.5,448.5 105.5,444.5 111.5,444.5 112.5,448.5 113.5,444.5 115.5,444.5 116.5,448.5 117.5,444.5 118.5,444.5 119.5,448.5 120.5,444.5 121.5,444.5 122.5,448.5 125.5,448.5 126.5,444.5 127.5,444.5 128.5,448.5 133.5,448.5 134.5,444.5 136.5,444.5 137.5,448.5 139.5,448.5 140.5,444.5 142.5,444.5 143.5,448.5 144.5,448.5 145.5,444.5 147.5,444.5 148.5,448.5 149.5,444.5 150.5,448.5 151.5,444.5 152.5,448.5 161.5,448.5 162.5,444.5 163.5,448.5 169.5,448.5 170.5,444.5 171.5,444.5 172.5,448.5 185.5,448.5 186.5,444.5 187.5,448.5 189.5,448.5 190.5,444.5 191.5,448.5 195.5,448.5 196.5,444.5 197.5,448.5 221.5,448.5 222.5,452.5 223.5,448.5 224.5,448.5 225.5,452.5 226.5,448.5 227.5,448.5 228.5,452.5 229.5,448.5 251.5,448.5 252.5,452.5 253.5,448.5 254.5,452.5 255.5,448.5 256.5,448.5 257.5,452.5 258.5,448.5 259.5,448.5 260.5,452.5 261.5,452.5 262.5,448.5 269.5,448.5 270.5,452.5 271.5,452.5 272.5,448.5 273.5,448.5 274.5,452.5 275.5,448.5 276.5,452.5 277.5,448.5 278.5,452.5 279.5,448.5 280.5,448.5 281.5,452.5 282.5,452.5 283.5,448.5 284.5,448.5 285.5,452.5 286.5,452.5 287.5,448.5 288.5,448.5 289.5,452.5 290.5,448.5 291.5,452.5 292.5,448.5 293.5,452.5 294.5,448.5 295.5,448.5 296.5,452.5 297.5,448.5 298.5,452.5 299.5,448.5 300.5,452.5 301.5,448.5 303.5,448.5 304.5,452.5 305.5,448.5 306.5,452.5 307.5,448.5 309.5,448.5 310.5,452.5 311.5,448.5 312.5,452.5 313.5,448.5 314.5,452.5 315.5,448.5 316.5,448.5 317.5,452.5 318.5,448.5 319.5,448.5 320.5,452.5 321.5,452.5 322.5,448.5 323.5,452.5 324.5,452.5 325.5,448.5 326.5,452.5 327.5,448.5 329.5,448.5 330.5,452.5 331.5,448.5 333.5,448.5 334.5,452.5 335.5,448.5 338.5,448.5 339.5,452.5 340.5,448.5 341.5,448.5 342.5,452.5 343.5,448.5 344.5,448.5 345.5,452.5 346.5,448.5 347.5,452.5 348.5,448.5 349.5,452.5 350.5,452.5 351.5,448.5 352.5,448.5 353.5,452.5 354.5,448.5 357.5,448.5 358.5,452.5 359.5,448.5 360.5,452.5 361.5,448.5 362.5,448.5 363.5,452.5 364.5,448.5 365.5,452.5 366.5,448.5 367.5,452.5 368.5,448.5 369.5,448.5 370.5,452.5 371.5,448.5 374.5,448.5 375.5,452.5 376.5,448.5 377.5,448.5 378.5,452.5 379.5,448.5 380.5,448.5 381.5,452.5 382.5,448.5 383.5,452.5 384.5,448.5 385.5,448.5 386.5,452.5 387.5,448.5 388.5,452.5 389.5,448.5 390.5,448.5 391.5,452.5 392.5,448.5 393.5,448.5 394.5,452.5 395.0,448.5 396.0,452.0 397.0,448.5 397.5,455.0 398.0,467.0 398.5,453.0 399.5,444.0 400.3,448.0 400.9,478.5 401.5,460.0 402.0,444.0 403.0,436.0 403.7,446.0 404.5,436.0 405.5,448.0 406.5,442.0 407.0,452.0 408.0,448.5 408.5,452.5 409.5,448.5 414.5,448.5 415.5,452.5 416.5,448.5 417.5,448.5 418.5,452.5 419.5,448.5 420.5,448.5 421.5,452.5 422.5,448.5 423.5,452.5 424.5,448.5 431.5,448.5 432.5,452.5 433.5,448.5 434.5,448.5 435.5,452.5 437.5,448.5 446.5,448.5 447.5,444.5 448.5,448.5 450.5,448.5 451.5,444.5 452.5,448.5 453.5,444.5 454.5,448.5 455.5,444.5 456.5,448.5 458.5,448.5 459.5,444.5 460.5,448.5 461.5,448.5 462.5,444.5 463.5,448.5 465.5,448.5 466.5,444.5 467.5,448.5 470.5,448.5 471.5,444.5 472.5,448.5 473.5,444.5 474.5,448.5 475.5,444.5 476.5,448.5 479.5,448.5 480.5,444.5 481.5,448.5 482.5,444.5 483.5,448.5 484.5,448.5 485.5,444.5 486.5,448.5 487.5,444.5 488.5,448.5 489.5,444.5 490.5,448.5 491.5,444.5 492.5,448.5 494.5,448.5 495.5,444.5 496.5,448.5 497.5,444.5 498.5,448.5 499.5,448.5 500.5,444.5 501.5,448.5 502.5,448.5 503.5,444.5 504.5,448.5 505.5,444.5 506.5,448.5 507.5,448.5 508.5,444.5 509.5,463.5 510.5,448.5 511.5,444.5 512.5,448.5 513.5,444.5 514.5,448.5 515.5,444.5 516.5,448.5 517.5,444.5 518.5,448.5 519.5,448.5 520.5,444.5 521.5,448.5 522.5,444.5 523.5,448.5 524.5,444.5 525.5,448.5 526.5,444.5 527.5,448.5 531.5,448.5 532.5,444.5 533.5,448.5 540.5,448.5 541.5,444.5 542.5,448.5 543.5,444.5 544.5,448.5 545.5,448.5 546.5,444.5 547.5,448.5 550.5,448.5 551.5,444.5 552.5,448.5 562.5,448.5 563.5,444.5 564.5,444.5 565.5,448.5 566.5,448.5 567.5,444.5 568.5,448.5 576.5,448.5 577.5,444.5 578.5,448.5 582.5,448.5 583.5,444.5 584.5,444.5 585.5,448.5 587.5,448.5 588.5,444.5 589.5,448.5 590.5,448.5 591.5,444.5 592.5,448.5 593.5,444.5 594.5,444.5 595.5,448.5 596.5,448.5 597.5,444.5 598.5,448.5 599.5,448.5 600.5,444.5 601.5,448.5 602.5,448.5 603.5,444.5 604.5,448.5 605.5,444.5 606.5,448.5 607.5,448.5 608.5,444.5 609.5,448.5 612.5,448.5 613.5,444.5 614.5,448.5 653.5,448.5 654.5,452.5 655.5,448.5 656.5,448.5 657.5,452.5 658.5,452.5 659.5,448.5 660.5,448.5 661.5,452.5 662.5,452.5 663.5,448.5 672.5,448.5 673.5,452.5 674.5,448.5 675.5,448.5 676.5,452.5 677.5,448.5 678.5,452.5 679.5,448.5 692.5,448.5 693.5,452.5 694.5,448.5 695.5,448.5 696.5,452.5 697.5,448.5 698.5,452.5 699.5,448.5 700.5,452.5 701.5,448.5 703.5,448.5 704.5,452.5 705.5,448.5 706.5,452.5 707.5,448.5 708.5,452.5 709.5,448.5 710.5,448.5 711.5,452.5 712.5,448.5 713.5,452.5 714.5,448.5 715.5,452.5 716.5,448.5 717.5,452.5 718.5,448.5 719.5,448.5 720.5,452.5 721.5,448.5 722.5,448.5 723.5,452.5 724.5,452.5 725.5,448.5 726.5,448.5 727.5,452.5 728.5,448.5 729.5,448.5 730.5,452.5 731.5,448.5 732.5,452.5 733.5,448.5 734.5,452.5 735.5,448.5 736.5,448.5 737.5,452.5 738.5,448.5 739.5,452.5 740.5,448.5 742.5,448.5 743.5,452.5 744.5,452.5 745.5,448.5 746.5,452.5 747.5,448.5 748.5,448.5 749.5,452.5 750.5,448.5 751.5,452.5 752.5,448.5 753.0,448.5"/><polyline fill="none" stroke="#ffff00" stroke-width="1.25" points="56.8,327.2 61.7,327.2 63.3,330.1 64.7,327.2 68.6,326.2 69.6,323.7 71.5,322.3 73.5,324.2 81.3,323.7 82.3,321.7 87.2,320.3 92.1,320.3 94.0,322.3 97.0,316.4 101.3,315.4 102.3,313.1 103.8,346.8 105.4,329.1 107.1,315.4 108.7,310.5 110.3,308.6 111.6,305.7 112.6,318.4 114.2,308.6 115.4,310.5 116.5,317.4 119.5,329.1 121.4,327.2 124.4,330.1 125.3,321.3 128.9,316.4 131.2,319.4 134.1,323.3 138.5,329.1 140.0,324.2 143.0,322.3 145.9,322.3 149.8,326.2 152.7,330.1 155.7,324.8 158.6,324.8 163.5,330.1 167.4,327.2 172.3,327.2 173.3,330.1 177.2,330.1 178.8,327.2 180.1,330.1 183.1,330.1 184.1,327.2 186.0,327.6 187.0,330.1 190.9,331.1 191.9,333.1 193.8,330.1 195.8,333.1 196.8,330.1 197.7,333.1 204.6,334.0 206.6,335.4 210.5,334.0 213.4,330.1 216.3,335.4 235.9,335.4 237.9,337.9 240.8,336.0 242.8,337.9 244.7,335.4 246.7,337.9 249.6,337.9 242.9,335.2 244.9,335.2 246.8,338.2 251.7,339.1 253.7,341.1 255.7,338.7 257.6,341.5 259.6,338.7 261.5,341.5 263.5,338.7 265.4,341.5 267.4,338.7 269.4,341.1 279.1,341.5 280.1,344.0 282.1,341.5 284.0,344.0 286.0,341.5 287.9,344.0 289.9,341.5 291.9,342.1 292.8,344.0 303.6,344.6 305.6,347.0 307.5,344.6 309.5,347.0 311.4,344.6 313.4,347.0 317.3,346.6 319.3,344.6 321.2,346.6 332.0,346.6 333.5,349.3 334.9,346.6 336.3,349.3 337.8,346.6 339.4,349.3 340.8,346.6 342.2,349.3 343.7,348.9 355.5,349.3 357.4,352.4 359.4,349.3 367.2,349.3 369.2,352.4 371.5,349.3 373.1,352.4 374.6,349.3 376.6,352.4 378.9,349.9 380.9,352.4 384.8,352.4 386.4,355.8 388.3,352.4 392.6,352.4 394.6,355.8 395.6,352.8 395.7,355.7 397.3,354.7 398.6,392.0 399.2,426.3 400.2,407.6 401.2,364.5 402.0,342.9 403.5,325.3 404.5,320.4 405.5,305.3 406.1,325.3 407.5,345.9 409.4,324.3 411.4,342.9 414.7,366.5 417.3,354.7 420.2,339.0 423.5,324.9 426.1,339.0 429.0,348.8 432.0,345.9 434.9,339.0 438.8,330.8 441.8,336.1 444.7,343.9 447.6,339.0 450.6,330.2 453.1,327.3 456.5,335.1 459.4,335.1 462.4,327.3 464.3,330.2 467.3,327.3 470.2,327.3 473.1,330.2 476.1,327.3 478.0,324.9 481.0,327.3 482.9,324.3 485.9,322.4 487.8,324.3 490.8,320.4 493.7,322.4 497.6,322.4 499.6,319.4 502.5,319.4 505.5,316.5 507.5,319.4 509.4,341.0 510.8,341.0 513.3,314.5 515.9,308.6 518.2,317.5 519.6,311.6 522.2,317.5 526.1,330.2 529.0,330.2 532.0,322.4 535.3,316.5 538.8,322.4 542.7,327.3 545.7,324.3 549.6,322.4 552.5,324.3 557.5,330.2 560.4,327.3 563.3,324.9 567.3,330.2 571.2,330.2 574.1,327.3 577.1,330.2 580.0,330.2 572.9,327.4 575.9,327.4 578.8,330.9 581.7,333.3 583.3,330.3 587.2,330.3 587.6,327.4 589.6,330.9 591.5,333.3 598.4,333.3 599.0,330.3 600.3,333.3 603.3,333.3 604.2,330.3 606.2,333.3 609.1,333.3 612.1,335.6 615.0,333.3 617.0,335.6 618.9,333.3 620.5,335.6 628.7,335.6 630.3,338.6 632.6,335.6 635.6,335.6 636.5,338.6 638.5,335.6 640.1,338.6 642.0,335.6 643.4,338.6 644.8,335.6 646.3,338.6 652.2,338.2 654.1,335.6 656.1,338.2 659.0,338.6 661.0,341.5 663.0,338.6 664.9,341.5 666.9,338.6 668.8,341.5 670.4,338.6 672.7,338.6 674.7,341.1 687.4,341.1 689.0,344.0 690.9,341.5 692.9,344.0 695.2,341.5 697.2,344.0 699.2,341.5 701.1,344.0 703.5,341.5 705.0,344.0 707.0,346.6 709.9,344.6 711.9,346.6 713.8,344.6 715.8,346.6 717.7,344.6 719.7,346.6 721.1,344.6 722.6,346.6 733.4,346.6 735.4,349.3 737.3,346.6 739.3,349.3 743.2,349.3 744.8,346.6 746.7,349.3 749.1,346.6 751.0,349.3 752.6,347.0"/></svg>
<svg class="b" style="left:0;top:0" width="1022" height="765"><polyline fill="none" stroke="#00ffff" stroke-width="1.2" points="55.0,163.5 120.0,163.5 121.0,164.8 122.0,163.5 396.0,163.5 397.5,165.5 399.0,163.8 400.5,167.0 402.0,162.5 404.0,163.8 405.0,162.3 406.0,163.5 508.0,163.5 509.0,165.0 510.0,163.5 753.0,163.5"/><polyline fill="none" stroke="#ffff00" stroke-width="1.2" points="55.0,154.5 58.0,154.5 59.0,155.5 62.0,155.5 63.0,154.5 90.0,154.5 92.0,153.5 94.0,154.5 100.0,154.5 101.0,153.5 118.0,153.5 121.0,155.0 123.0,153.0 126.0,152.0 128.0,153.0 131.0,152.0 134.0,153.5 140.0,153.5 141.0,154.5 160.0,154.5 161.0,153.5 165.0,154.5 215.0,154.5 216.0,155.5 245.0,155.5 246.0,154.5 248.0,155.5 250.0,154.5 252.0,155.5 254.0,154.5 256.0,155.5 300.0,155.5 359.0,155.5 360.0,156.5 362.0,155.5 370.0,156.0 372.0,156.8 374.0,155.8 376.0,156.6 378.0,155.8 381.0,156.5 398.0,156.5 399.5,162.0 401.0,158.0 403.0,154.5 404.5,152.5 406.0,154.5 408.0,153.5 412.0,155.5 414.5,157.0 417.0,155.5 420.0,154.5 424.0,155.5 435.0,155.5 437.0,154.5 440.0,155.0 445.0,155.5 480.0,155.5 481.0,154.5 483.0,155.5 500.0,154.5 506.0,154.5 508.0,156.0 510.0,153.5 514.0,152.5 517.0,153.5 520.0,152.5 524.0,153.5 528.0,154.5 540.0,153.5 542.0,154.5 580.0,154.5 615.0,154.5 616.0,155.5 620.0,154.5 622.0,155.5 625.0,154.5 628.0,155.5 631.0,154.5 634.0,155.5 638.0,154.5 640.0,155.5 700.0,155.5 735.0,155.5 736.0,156.5 738.0,155.5 741.0,156.5 743.0,155.5 746.0,156.5 753.0,156.5"/></svg>
<svg class="b" style="left:399px;top:137px" width="14" height="17" viewBox="0 0 14 17"><path d="M0 0 H13 V13.5 L6.5 16.2 L0 13.5 Z" fill="#ffff00"/><path d="M2 2.5 H11 M6.5 2.5 V14.5" stroke="#333" stroke-width="1" fill="none"/></svg>
<svg class="b" style="left:399px;top:193.5px" width="14" height="17" viewBox="0 0 14 17"><path d="M0 0 H13 V13.5 L6.5 16.2 L0 13.5 Z" fill="#ffff00"/><path d="M2 2.5 H11 M6.5 2.5 V14.5" stroke="#333" stroke-width="1" fill="none"/></svg>
<svg class="b" style="left:23px;top:320px" width="34" height="17" viewBox="0 0 34 17"><path d="M0 0 H25 L33 8.5 L25 17 H0 Z" fill="#ffff00"/></svg><span class="t" style="left:24.80px;top:321px;font-size:11.5px;line-height:14px;color:#2c2c2c;font-family:'Liberation Serif', serif;font-weight:400;letter-spacing:0.000px;transform:scale(0.8746,1.0000);transform-origin:0 11px;">CH1</span>
<svg class="b" style="left:23px;top:569px" width="34" height="17" viewBox="0 0 34 17"><path d="M0 0 H25 L33 8.5 L25 17 H0 Z" fill="#00ffff"/></svg><span class="t" style="left:24.80px;top:570px;font-size:11.5px;line-height:14px;color:#2c2c2c;font-family:'Liberation Serif', serif;font-weight:400;letter-spacing:0.000px;transform:scale(0.8746,1.0000);transform-origin:0 11px;">CH2</span>
<svg class="b" style="left:757px;top:436px" width="18" height="14" viewBox="0 0 18 14"><path d="M0 6.5 L3 0 H17 V13 H3 Z" fill="#00ffff"/><path d="M2 6.5 H14.5 M14.5 2 V10.5" stroke="#333" stroke-width="1" fill="none"/></svg>
<div class="b" style="left:13px;top:633px;width:120px;height:56px;border:1px solid #1f9a8a;box-sizing:border-box;"></div><div class="b" style="left:17px;top:637px;width:112px;height:48px;background:#2a2f30;"></div>
<div class="b" style="left:138px;top:633px;width:120px;height:56px;border:1px solid #1f9a8a;box-sizing:border-box;"></div><div class="b" style="left:142px;top:637px;width:112px;height:48px;background:#2a2f30;"></div>
<div class="b" style="left:677px;top:633px;width:120px;height:56px;border:1px solid #1f9a8a;box-sizing:border-box;"></div><div class="b" style="left:681px;top:637px;width:112px;height:48px;background:#2a2f30;"></div>
<div class="b" style="left:13px;top:697px;width:784px;height:40px;border:1px solid #1f9a8a;box-sizing:border-box;"></div><div class="b" style="left:17px;top:701px;width:776px;height:32px;background:#2a2f30;"></div>
<span class="t" style="left:17.20px;top:637px;font-size:14px;line-height:17px;color:#ffff00;font-family:'Liberation Serif', serif;font-weight:400;letter-spacing:-0.973px;">CH1</span>
<span class="t" style="left:80.20px;top:637px;font-size:14px;line-height:17px;color:#ffff00;font-family:'Liberation Serif', serif;font-weight:400;letter-spacing:-0.131px;">X10  AC</span>
<span class="t" style="left:64.70px;top:653px;font-size:14px;line-height:17px;color:#ffff00;font-family:'Liberation Serif', serif;font-weight:400;letter-spacing:-0.309px;">100 mV/div</span>
<span class="t" style="left:66.70px;top:669px;font-size:14px;line-height:17px;color:#ffff00;font-family:'Liberation Serif', serif;font-weight:400;letter-spacing:-0.062px;">209.76 mV</span>
<span class="t" style="left:142.50px;top:637px;font-size:14px;line-height:17px;color:#00ffff;font-family:'Liberation Serif', serif;font-weight:400;letter-spacing:-0.973px;">CH2</span>
<span class="t" style="left:204.00px;top:637px;font-size:14px;line-height:17px;color:#00ffff;font-family:'Liberation Serif', serif;font-weight:400;letter-spacing:-0.092px;">X10  DC</span>
<span class="t" style="left:214.00px;top:653px;font-size:14px;line-height:17px;color:#00ffff;font-family:'Liberation Serif', serif;font-weight:400;letter-spacing:-0.357px;">1 V/div</span>
<span class="t" style="left:212.00px;top:669px;font-size:14px;line-height:17px;color:#00ffff;font-family:'Liberation Serif', serif;font-weight:400;letter-spacing:-0.086px;">-3.98 V</span>
<span class="t" style="left:682.00px;top:637px;font-size:14px;line-height:17px;color:#ffff00;font-family:'Liberation Serif', serif;font-weight:400;letter-spacing:-0.350px;">Time</span>
<span class="t" style="left:747.60px;top:653px;font-size:14px;line-height:17px;color:#ffff00;font-family:'Liberation Serif', serif;font-weight:400;letter-spacing:0.039px;">2 us/div</span>
<span class="t" style="left:682.00px;top:669px;font-size:14px;line-height:17px;color:#ffff00;font-family:'Liberation Serif', serif;font-weight:400;letter-spacing:-1.723px;">1KB</span>
<span class="t" style="left:738.60px;top:669px;font-size:14px;line-height:17px;color:#ffff00;font-family:'Liberation Serif', serif;font-weight:400;letter-spacing:0.102px;">48 MSa/s</span>
<span class="t" style="left:17.20px;top:701px;font-size:14px;line-height:17px;color:#ffff00;font-family:'Liberation Serif', serif;font-weight:400;letter-spacing:-0.059px;">Vmin= -238.014 mV</span>
<span class="t" style="left:161.30px;top:701px;font-size:14px;line-height:17px;color:#ffff00;font-family:'Liberation Serif', serif;font-weight:400;letter-spacing:-0.079px;">Vmax= 56.989 mV</span>
<span class="t" style="left:305.00px;top:701px;font-size:14px;line-height:17px;color:#ffff00;font-family:'Liberation Serif', serif;font-weight:400;letter-spacing:-0.036px;">Vpp= 295.003 mV</span>
<span class="t" style="left:449.00px;top:701px;font-size:14px;line-height:17px;color:#ffff00;font-family:'Liberation Serif', serif;font-weight:400;letter-spacing:0.050px;">F= 0.000 Hz</span>
<span class="t" style="left:17.20px;top:717px;font-size:14px;line-height:17px;color:#00ffff;font-family:'Liberation Serif', serif;font-weight:400;letter-spacing:-0.137px;">Vmin= 2.392 V</span>
<span class="t" style="left:161.30px;top:717px;font-size:14px;line-height:17px;color:#00ffff;font-family:'Liberation Serif', serif;font-weight:400;letter-spacing:-0.081px;">Vmax= 3.422 V</span>
<span class="t" style="left:305.00px;top:717px;font-size:14px;line-height:17px;color:#00ffff;font-family:'Liberation Serif', serif;font-weight:400;letter-spacing:-0.033px;">Vpp= 1.030 V</span>
<span class="t" style="left:449.00px;top:717px;font-size:14px;line-height:17px;color:#00ffff;font-family:'Liberation Serif', serif;font-weight:400;letter-spacing:0.050px;">F= 0.000 Hz</span>
<div class="b" style="left:808px;top:112px;width:211px;height:631px;background:#f0f0f0;"></div>
<div class="b" style="left:1019px;top:110px;width:2px;height:635px;background:#fdfdfd;"></div>
<div class="b" style="left:1021px;top:8px;width:1px;height:757px;background:#b4b4b4;"></div>
<div class="b" style="left:808px;top:116px;width:209px;height:32px;border:1px solid #dcdcdc;box-sizing:border-box;"></div>
<div class="b" style="left:808px;top:153px;width:209px;height:82px;border:1px solid #dcdcdc;box-sizing:border-box;"></div>
<div class="b" style="left:808px;top:238px;width:209px;height:82px;border:1px solid #dcdcdc;box-sizing:border-box;"></div>
<div class="b" style="left:808px;top:324px;width:209px;height:91px;border:1px solid #dcdcdc;box-sizing:border-box;"></div>
<div class="b" style="left:808px;top:434px;width:209px;height:250px;border:1px solid #dcdcdc;box-sizing:border-box;"></div>
<div class="b" style="left:831px;top:122px;width:58px;height:21px;border:1px solid #d0d0d0;box-sizing:border-box;border-radius:4px;background:#fdfdfd;"></div>
<div class="b" style="left:938px;top:122px;width:55px;height:21px;border:1px solid #d0d0d0;box-sizing:border-box;border-radius:4px;background:#fdfdfd;"></div>
<span class="t" style="left:848.80px;top:125px;font-size:12px;line-height:14px;color:#000;font-family:'Liberation Sans', sans-serif;font-weight:400;letter-spacing:0.000px;transform:scale(0.9075,1.0000);transform-origin:0 11px;">Auto</span>
<span class="t" style="left:955.60px;top:125px;font-size:12px;line-height:14px;color:#000;font-family:'Liberation Sans', sans-serif;font-weight:400;letter-spacing:0.000px;transform:scale(0.8588,1.0000);transform-origin:0 11px;">Run</span>
<div class="b" style="left:812px;top:157px;width:51px;height:21px;border:1px solid #e6e6e6;box-sizing:border-box;border-radius:3px;background:#f5f5f5;"></div><svg class="b" style="left:817.2px;top:159.5px" width="16" height="16" viewBox="0 0 16 16"><circle cx="8" cy="8" r="6.9" fill="#00ff00" stroke="#111" stroke-width="1.25"/><path d="M5.4 8.2 L8.2 5.2" stroke="#fff" stroke-width="1.5" fill="none" stroke-linecap="round"/></svg><span class="t" style="left:836.00px;top:160px;font-size:12px;line-height:14px;color:#000;font-family:'Liberation Sans', sans-serif;font-weight:400;letter-spacing:0.000px;transform:scale(0.8662,1.0000);transform-origin:0 11px;">CH1</span>
<div class="b" style="left:811px;top:183px;width:53px;height:21px;border:1px solid #0078d7;box-sizing:border-box;background:#b2b2b2;"></div><span class="t" style="left:814.80px;top:188px;font-size:11px;line-height:13px;color:#000;font-family:'Liberation Sans', sans-serif;font-weight:400;letter-spacing:0.000px;transform:scale(0.8738,1.0000);transform-origin:0 10px;">X10</span><svg class="b" style="left:850.0px;top:191.5px" width="9" height="5"><path d="M0.5 0.5 L4.5 4.5 L8.5 0.5" fill="none" stroke="#444" stroke-width="1"/></svg>
<div class="b" style="left:812px;top:212px;width:50.5px;height:21px;border:1px solid #d0d0d0;box-sizing:border-box;border-radius:4px;background:#fff;"></div><span class="t" style="left:815.70px;top:215px;font-size:12px;line-height:14px;color:#000;font-family:'Liberation Sans', sans-serif;font-weight:400;letter-spacing:0.000px;transform:scale(0.8524,1.0000);transform-origin:0 11px;">More</span><svg class="b" style="left:848px;top:221px" width="9" height="5"><path d="M0.3 0 H8.7 L4.5 4.8 Z" fill="#4a74c0"/></svg>
<div class="b" style="left:812px;top:241px;width:51px;height:21px;border:1px solid #e6e6e6;box-sizing:border-box;border-radius:3px;background:#f5f5f5;"></div><svg class="b" style="left:817.2px;top:243.5px" width="16" height="16" viewBox="0 0 16 16"><circle cx="8" cy="8" r="6.9" fill="#00ff00" stroke="#111" stroke-width="1.25"/><path d="M5.4 8.2 L8.2 5.2" stroke="#fff" stroke-width="1.5" fill="none" stroke-linecap="round"/></svg><span class="t" style="left:836.00px;top:244px;font-size:12px;line-height:14px;color:#000;font-family:'Liberation Sans', sans-serif;font-weight:400;letter-spacing:0.000px;transform:scale(0.8662,1.0000);transform-origin:0 11px;">CH2</span>
<div class="b" style="left:811px;top:268px;width:53px;height:21px;border:1px solid #0078d7;box-sizing:border-box;background:#b2b2b2;"></div><span class="t" style="left:814.80px;top:273px;font-size:11px;line-height:13px;color:#000;font-family:'Liberation Sans', sans-serif;font-weight:400;letter-spacing:0.000px;transform:scale(0.8738,1.0000);transform-origin:0 10px;">X10</span><svg class="b" style="left:850.0px;top:276.5px" width="9" height="5"><path d="M0.5 0.5 L4.5 4.5 L8.5 0.5" fill="none" stroke="#444" stroke-width="1"/></svg>
<div class="b" style="left:812px;top:298px;width:50.5px;height:21px;border:1px solid #d0d0d0;box-sizing:border-box;border-radius:4px;background:#fff;"></div><span class="t" style="left:815.70px;top:301px;font-size:12px;line-height:14px;color:#000;font-family:'Liberation Sans', sans-serif;font-weight:400;letter-spacing:0.000px;transform:scale(0.8524,1.0000);transform-origin:0 11px;">More</span><svg class="b" style="left:848px;top:307px" width="9" height="5"><path d="M0.3 0 H8.7 L4.5 4.8 Z" fill="#4a74c0"/></svg>
<div class="b" style="left:812px;top:386px;width:50.5px;height:21px;border:1px solid #d0d0d0;box-sizing:border-box;border-radius:4px;background:#fff;"></div><span class="t" style="left:815.70px;top:389px;font-size:12px;line-height:14px;color:#000;font-family:'Liberation Sans', sans-serif;font-weight:400;letter-spacing:0.000px;transform:scale(0.8524,1.0000);transform-origin:0 11px;">More</span><svg class="b" style="left:848px;top:395px" width="9" height="5"><path d="M0.3 0 H8.7 L4.5 4.8 Z" fill="#4a74c0"/></svg>
<svg class="b" style="left:0;top:0" width="1022" height="765"><defs><linearGradient id="kg" x1="0.85" y1="0.12" x2="0.2" y2="0.9"><stop offset="0" stop-color="#fafafa"/><stop offset="0.5" stop-color="#e2e2e2"/><stop offset="1" stop-color="#bebebe"/></linearGradient><radialGradient id="dg" cx="0.4" cy="0.35" r="0.7"><stop offset="0" stop-color="#6d8034"/><stop offset="1" stop-color="#46561c"/></radialGradient></defs>
<circle cx="954.4" cy="199.3" r="21.5" fill="#f6f6f6"/><circle cx="954.4" cy="199.3" r="20.7" fill="url(#kg)"/><circle cx="945.6" cy="207.6" r="5" fill="url(#dg)"/><line x1="938.6" y1="183.5" x2="934.1" y2="179.0" stroke="#2a2a2a" stroke-width="1.05"/><line x1="970.2" y1="183.5" x2="974.7" y2="179.0" stroke="#2a2a2a" stroke-width="1.05"/><line x1="938.6" y1="215.1" x2="934.1" y2="219.6" stroke="#2a2a2a" stroke-width="1.05"/><line x1="970.2" y1="215.1" x2="974.7" y2="219.6" stroke="#2a2a2a" stroke-width="1.05"/><line x1="948.7" y1="177.9" x2="947.8" y2="174.8" stroke="#2a2a2a" stroke-width="1.0"/><line x1="960.1" y1="177.9" x2="961.0" y2="174.8" stroke="#2a2a2a" stroke-width="1.0"/><line x1="933.0" y1="193.6" x2="929.9" y2="192.7" stroke="#2a2a2a" stroke-width="1.0"/><line x1="933.0" y1="205.0" x2="929.9" y2="205.9" stroke="#2a2a2a" stroke-width="1.0"/><line x1="975.8" y1="193.6" x2="978.9" y2="192.7" stroke="#2a2a2a" stroke-width="1.0"/><line x1="975.8" y1="205.0" x2="978.9" y2="205.9" stroke="#2a2a2a" stroke-width="1.0"/>
<circle cx="954.0" cy="286.9" r="21.5" fill="#f6f6f6"/><circle cx="954.0" cy="286.9" r="20.7" fill="url(#kg)"/><circle cx="945.2" cy="277.9" r="5" fill="url(#dg)"/><line x1="938.2" y1="271.1" x2="933.7" y2="266.6" stroke="#2a2a2a" stroke-width="1.05"/><line x1="969.8" y1="271.1" x2="974.3" y2="266.6" stroke="#2a2a2a" stroke-width="1.05"/><line x1="938.2" y1="302.7" x2="933.7" y2="307.2" stroke="#2a2a2a" stroke-width="1.05"/><line x1="969.8" y1="302.7" x2="974.3" y2="307.2" stroke="#2a2a2a" stroke-width="1.05"/><line x1="948.3" y1="265.5" x2="947.4" y2="262.4" stroke="#2a2a2a" stroke-width="1.0"/><line x1="959.7" y1="265.5" x2="960.6" y2="262.4" stroke="#2a2a2a" stroke-width="1.0"/><line x1="932.6" y1="281.2" x2="929.5" y2="280.3" stroke="#2a2a2a" stroke-width="1.0"/><line x1="932.6" y1="292.6" x2="929.5" y2="293.5" stroke="#2a2a2a" stroke-width="1.0"/><line x1="975.4" y1="281.2" x2="978.5" y2="280.3" stroke="#2a2a2a" stroke-width="1.0"/><line x1="975.4" y1="292.6" x2="978.5" y2="293.5" stroke="#2a2a2a" stroke-width="1.0"/>
<circle cx="947.1" cy="374.5" r="23.3" fill="#f6f6f6"/><circle cx="947.1" cy="374.5" r="22.5" fill="url(#kg)"/><circle cx="934.5" cy="368.6" r="5" fill="url(#dg)"/><line x1="929.9" y1="391.7" x2="925.3" y2="396.3" stroke="#2a2a2a" stroke-width="1.05"/><line x1="927.4" y1="388.3" x2="925.1" y2="389.9" stroke="#2a2a2a" stroke-width="1.0"/><line x1="925.3" y1="384.6" x2="922.8" y2="385.8" stroke="#2a2a2a" stroke-width="1.0"/><line x1="923.6" y1="380.8" x2="917.3" y2="382.5" stroke="#2a2a2a" stroke-width="1.05"/><line x1="923.2" y1="376.6" x2="920.4" y2="376.8" stroke="#2a2a2a" stroke-width="1.0"/><line x1="923.2" y1="372.4" x2="920.4" y2="372.2" stroke="#2a2a2a" stroke-width="1.0"/><line x1="923.6" y1="368.2" x2="917.3" y2="366.5" stroke="#2a2a2a" stroke-width="1.05"/><line x1="925.3" y1="364.4" x2="922.8" y2="363.2" stroke="#2a2a2a" stroke-width="1.0"/><line x1="927.4" y1="360.7" x2="925.1" y2="359.1" stroke="#2a2a2a" stroke-width="1.0"/><line x1="929.9" y1="357.3" x2="925.3" y2="352.7" stroke="#2a2a2a" stroke-width="1.05"/><line x1="933.3" y1="354.8" x2="931.7" y2="352.5" stroke="#2a2a2a" stroke-width="1.0"/><line x1="937.0" y1="352.7" x2="935.8" y2="350.2" stroke="#2a2a2a" stroke-width="1.0"/><line x1="940.8" y1="351.0" x2="939.1" y2="344.7" stroke="#2a2a2a" stroke-width="1.05"/><line x1="945.0" y1="350.6" x2="944.8" y2="347.8" stroke="#2a2a2a" stroke-width="1.0"/><line x1="949.2" y1="350.6" x2="949.4" y2="347.8" stroke="#2a2a2a" stroke-width="1.0"/><line x1="953.4" y1="351.0" x2="955.1" y2="344.7" stroke="#2a2a2a" stroke-width="1.05"/><line x1="957.2" y1="352.7" x2="958.4" y2="350.2" stroke="#2a2a2a" stroke-width="1.0"/><line x1="960.9" y1="354.8" x2="962.5" y2="352.5" stroke="#2a2a2a" stroke-width="1.0"/><line x1="964.3" y1="357.3" x2="968.9" y2="352.7" stroke="#2a2a2a" stroke-width="1.05"/><line x1="966.8" y1="360.7" x2="969.1" y2="359.1" stroke="#2a2a2a" stroke-width="1.0"/><line x1="968.9" y1="364.4" x2="971.4" y2="363.2" stroke="#2a2a2a" stroke-width="1.0"/><line x1="970.6" y1="368.2" x2="976.9" y2="366.5" stroke="#2a2a2a" stroke-width="1.05"/><line x1="971.0" y1="372.4" x2="973.8" y2="372.2" stroke="#2a2a2a" stroke-width="1.0"/><line x1="971.0" y1="376.6" x2="973.8" y2="376.8" stroke="#2a2a2a" stroke-width="1.0"/><line x1="970.6" y1="380.8" x2="976.9" y2="382.5" stroke="#2a2a2a" stroke-width="1.05"/><line x1="968.9" y1="384.6" x2="971.4" y2="385.8" stroke="#2a2a2a" stroke-width="1.0"/><line x1="966.8" y1="388.3" x2="969.1" y2="389.9" stroke="#2a2a2a" stroke-width="1.0"/><line x1="964.3" y1="391.7" x2="968.9" y2="396.3" stroke="#2a2a2a" stroke-width="1.05"/>
</svg>
<span class="t" style="left:914.80px;top:171px;font-size:14px;line-height:17px;color:#000;font-family:'Liberation Serif', serif;font-weight:400;letter-spacing:0.000px;transform:scale(0.7949,0.9000);transform-origin:0 13px;">1V</span>
<span class="t" style="left:976.00px;top:171px;font-size:14px;line-height:17px;color:#000;font-family:'Liberation Serif', serif;font-weight:400;letter-spacing:0.000px;transform:scale(0.8047,0.9000);transform-origin:0 13px;">10V</span>
<span class="t" style="left:893.00px;top:210px;font-size:14px;line-height:17px;color:#000;font-family:'Liberation Serif', serif;font-weight:400;letter-spacing:0.000px;transform:scale(0.8262,0.9000);transform-origin:0 13px;">100mV</span>
<span class="t" style="left:976.00px;top:210px;font-size:14px;line-height:17px;color:#000;font-family:'Liberation Serif', serif;font-weight:400;letter-spacing:0.000px;transform:scale(0.8133,0.9000);transform-origin:0 13px;">100V</span>
<span class="t" style="left:914.80px;top:258px;font-size:14px;line-height:17px;color:#000;font-family:'Liberation Serif', serif;font-weight:400;letter-spacing:0.000px;transform:scale(0.7949,0.9000);transform-origin:0 13px;">1V</span>
<span class="t" style="left:976.00px;top:258px;font-size:14px;line-height:17px;color:#000;font-family:'Liberation Serif', serif;font-weight:400;letter-spacing:0.000px;transform:scale(0.8047,0.9000);transform-origin:0 13px;">10V</span>
<span class="t" style="left:893.00px;top:297px;font-size:14px;line-height:17px;color:#000;font-family:'Liberation Serif', serif;font-weight:400;letter-spacing:0.000px;transform:scale(0.8262,0.9000);transform-origin:0 13px;">100mV</span>
<span class="t" style="left:976.00px;top:297px;font-size:14px;line-height:17px;color:#000;font-family:'Liberation Serif', serif;font-weight:400;letter-spacing:0.000px;transform:scale(0.8133,0.9000);transform-origin:0 13px;">100V</span>
<span class="t" style="left:916.10px;top:330px;font-size:14px;line-height:17px;color:#000;font-family:'Liberation Serif', serif;font-weight:400;letter-spacing:0.000px;transform:scale(0.9478,0.9000);transform-origin:0 13px;">100us</span>
<span class="t" style="left:955.30px;top:330px;font-size:14px;line-height:17px;color:#000;font-family:'Liberation Serif', serif;font-weight:400;letter-spacing:0.000px;transform:scale(0.9170,0.9000);transform-origin:0 13px;">1ms</span>
<span class="t" style="left:895.70px;top:341px;font-size:14px;line-height:17px;color:#000;font-family:'Liberation Serif', serif;font-weight:400;letter-spacing:0.000px;transform:scale(0.9113,0.9000);transform-origin:0 13px;">10us</span>
<span class="t" style="left:970.80px;top:343px;font-size:14px;line-height:17px;color:#000;font-family:'Liberation Serif', serif;font-weight:400;letter-spacing:0.000px;transform:scale(0.9196,0.9000);transform-origin:0 13px;">10ms</span>
<span class="t" style="left:895.70px;top:355px;font-size:14px;line-height:17px;color:#000;font-family:'Liberation Serif', serif;font-weight:400;letter-spacing:0.000px;transform:scale(0.8794,0.9000);transform-origin:0 13px;">1us</span>
<span class="t" style="left:976.70px;top:357px;font-size:14px;line-height:17px;color:#000;font-family:'Liberation Serif', serif;font-weight:400;letter-spacing:0.000px;transform:scale(0.9561,0.9000);transform-origin:0 13px;">100ms</span>
<span class="t" style="left:881.30px;top:369px;font-size:14px;line-height:17px;color:#000;font-family:'Liberation Serif', serif;font-weight:400;letter-spacing:0.000px;transform:scale(0.9418,0.9000);transform-origin:0 13px;">100ns</span>
<span class="t" style="left:977.10px;top:371px;font-size:14px;line-height:17px;color:#000;font-family:'Liberation Serif', serif;font-weight:400;letter-spacing:0.000px;transform:scale(0.8517,0.9000);transform-origin:0 13px;">1s</span>
<span class="t" style="left:895.70px;top:383px;font-size:14px;line-height:17px;color:#000;font-family:'Liberation Serif', serif;font-weight:400;letter-spacing:0.000px;transform:scale(0.9113,0.9000);transform-origin:0 13px;">10ns</span>
<span class="t" style="left:970.80px;top:385px;font-size:14px;line-height:17px;color:#000;font-family:'Liberation Serif', serif;font-weight:400;letter-spacing:0.000px;transform:scale(0.8691,0.9000);transform-origin:0 13px;">10s</span>
<div class="b" style="left:812px;top:428px;width:75px;height:12px;background:#f0f0f0;"></div>
<span class="t" style="left:814.10px;top:426px;font-size:11px;line-height:13px;color:#000;font-family:'Liberation Sans', sans-serif;font-weight:400;letter-spacing:-0.228px;">Trigger Mode</span>
<span class="t" style="left:814.10px;top:452px;font-size:11px;line-height:13px;color:#000;font-family:'Liberation Sans', sans-serif;font-weight:400;letter-spacing:-0.234px;">Trigger Source</span>
<span class="t" style="left:814.10px;top:477px;font-size:11px;line-height:13px;color:#000;font-family:'Liberation Sans', sans-serif;font-weight:400;letter-spacing:-0.153px;">Trigger Style</span>
<span class="t" style="left:814.10px;top:503px;font-size:11px;line-height:13px;color:#000;font-family:'Liberation Sans', sans-serif;font-weight:400;letter-spacing:-0.191px;">Trigger Level</span>
<div class="b" style="left:886px;top:422px;width:125.5px;height:21px;border:1px solid #0078d7;box-sizing:border-box;background:#b2b2b2;"></div><span class="t" style="left:889.80px;top:427px;font-size:11px;line-height:13px;color:#000;font-family:'Liberation Sans', sans-serif;font-weight:400;letter-spacing:0.000px;transform:scale(1.0000,1.0000);transform-origin:0 10px;">Auto</span><svg class="b" style="left:997.5px;top:430.5px" width="9" height="5"><path d="M0.5 0.5 L4.5 4.5 L8.5 0.5" fill="none" stroke="#444" stroke-width="1"/></svg>
<div class="b" style="left:886px;top:446.5px;width:125.5px;height:21px;border:1px solid #0078d7;box-sizing:border-box;background:#b2b2b2;"></div><span class="t" style="left:889.80px;top:451px;font-size:11px;line-height:13px;color:#000;font-family:'Liberation Sans', sans-serif;font-weight:400;letter-spacing:0.000px;transform:scale(1.0000,1.0000);transform-origin:0 10px;">CH2</span><svg class="b" style="left:997.5px;top:455.0px" width="9" height="5"><path d="M0.5 0.5 L4.5 4.5 L8.5 0.5" fill="none" stroke="#444" stroke-width="1"/></svg>
<div class="b" style="left:886px;top:469.5px;width:125.5px;height:21px;border:1px solid #0078d7;box-sizing:border-box;background:#b2b2b2;"></div><span class="t" style="left:889.80px;top:473px;font-size:11px;line-height:13px;color:#000;font-family:'Liberation Sans', sans-serif;font-weight:400;letter-spacing:0.000px;transform:scale(1.0000,1.0000);transform-origin:0 10px;">Edge</span><svg class="b" style="left:997.5px;top:478.0px" width="9" height="5"><path d="M0.5 0.5 L4.5 4.5 L8.5 0.5" fill="none" stroke="#444" stroke-width="1"/></svg>
<div class="b" style="left:881px;top:503px;width:84px;height:19px;border:1px solid #7aa7dc;box-sizing:border-box;background:#fff;"></div>
<span class="t" style="left:931.40px;top:507px;font-size:11px;line-height:13px;color:#000;font-family:'Liberation Sans', sans-serif;font-weight:400;letter-spacing:-0.130px;">3.300</span>
<span class="t" style="left:910.70px;top:507px;font-size:11px;line-height:13px;color:#8a8a8a;font-family:'Liberation Sans', sans-serif;font-weight:400;letter-spacing:-0.302px;">0 00</span>
<div class="b" style="left:966.7px;top:502.4px;width:43.6px;height:19px;border:1px solid #e0e0e0;box-sizing:border-box;background:#f8f8f8;"></div>
<span class="t" style="left:970.70px;top:506px;font-size:11px;line-height:13px;color:#000;font-family:'Liberation Sans', sans-serif;font-weight:400;letter-spacing:0.000px;">V</span>
<svg class="b" style="left:997.5px;top:510.5px" width="9" height="5"><path d="M0.5 0.5 L4.5 4.5 L8.5 0.5" fill="none" stroke="#444" stroke-width="1"/></svg>
<span class="t" style="left:814.10px;top:537px;font-size:11px;line-height:13px;color:#000;font-family:'Liberation Sans', sans-serif;font-weight:400;letter-spacing:0.008px;">Trigger Sensitivity(0-1.0)</span>
<div class="b" style="left:960px;top:536px;width:29.7px;height:21px;border:1.5px solid #000;box-sizing:border-box;background:#fff;"></div>
<span class="t" style="left:963.60px;top:540px;font-size:11px;line-height:13px;color:#000;font-family:'Liberation Sans', sans-serif;font-weight:400;letter-spacing:-0.145px;">0.4</span>
<span class="t" style="left:992.90px;top:537px;font-size:11px;line-height:13px;color:#000;font-family:'Liberation Sans', sans-serif;font-weight:400;letter-spacing:-0.229px;">div</span>
<span class="t" style="left:814.10px;top:560px;font-size:11px;line-height:13px;color:#000;font-family:'Liberation Sans', sans-serif;font-weight:400;letter-spacing:-0.030px;">Trigger Front Percent(1-99)</span>
<div class="b" style="left:972px;top:559px;width:23.8px;height:21px;border:1.5px solid #000;box-sizing:border-box;background:#fff;"></div>
<span class="t" style="left:976.70px;top:563px;font-size:11px;line-height:13px;color:#000;font-family:'Liberation Sans', sans-serif;font-weight:400;letter-spacing:-0.732px;">50</span>
<span class="t" style="left:1000.30px;top:560px;font-size:11px;line-height:13px;color:#000;font-family:'Liberation Sans', sans-serif;font-weight:400;letter-spacing:0.000px;">%</span>
<div class="b" style="left:876px;top:583.5px;width:73px;height:20px;border:1px solid #dddddd;box-sizing:border-box;border-radius:4px;background:#f2f2f2;"></div>
<span class="t" style="left:898.70px;top:587px;font-size:11px;line-height:13px;color:#7a7a7a;font-family:'Liberation Sans', sans-serif;font-weight:400;letter-spacing:-0.104px;">Force</span>
<div class="b" style="left:1px;top:741px;width:1019px;height:4px;background:#f7f7f7;"></div>
<div class="b" style="left:5px;top:741px;width:801px;height:1px;background:#fff;"></div>
<div class="b" style="left:1px;top:745px;width:1020px;height:1px;background:#5585c6;"></div>
<div class="b" style="left:1px;top:746px;width:1020px;height:18px;background:linear-gradient(#dde9fb,#d2e2fa 30%,#b6d0f5 40%,#adc9f2 85%,#bcd4f5);"></div>
<span class="t" style="left:5.90px;top:750px;font-size:11px;line-height:13px;color:#1c2a8c;font-family:'Liberation Sans', sans-serif;font-weight:400;letter-spacing:-0.375px;">Ready</span>
<div class="b" style="left:688px;top:748px;width:1px;height:15px;background:#8fb0de;"></div>
<div class="b" style="left:689px;top:748px;width:1px;height:15px;background:#eaf2fd;"></div>
<span class="t" style="left:691.00px;top:750px;font-size:11px;line-height:13px;color:#1c2a8c;font-family:'Liberation Sans', sans-serif;font-weight:400;letter-spacing:-0.151px;">ISDS205A(1.1)(2)Connected</span>
<div class="b" style="left:1003px;top:748px;width:1px;height:15px;background:#8fb0de;"></div>
<div class="b" style="left:1004px;top:748px;width:1px;height:15px;background:#eaf2fd;"></div>
<div class="b" style="left:1018px;top:753px;width:2px;height:2px;background:#2f4f7f;"></div>
<div class="b" style="left:1014px;top:757px;width:2px;height:2px;background:#2f4f7f;"></div>
<div class="b" style="left:1018px;top:757px;width:2px;height:2px;background:#2f4f7f;"></div>
<div class="b" style="left:1010px;top:761px;width:2px;height:2px;background:#2f4f7f;"></div>
<div class="b" style="left:1014px;top:761px;width:2px;height:2px;background:#2f4f7f;"></div>
<div class="b" style="left:1018px;top:761px;width:2px;height:2px;background:#2f4f7f;"></div>
<div class="b" style="left:0px;top:764px;width:1022px;height:1px;background:#a8a8a8;"></div>
<svg class="b" style="left:0;top:758px" width="7" height="7"><path d="M0 7 H7 A7 7 0 0 1 0 0 Z" fill="#e4e4e4"/><path d="M0.5 0 A6.5 6.5 0 0 0 7 6.5" fill="none" stroke="#a8a8a8" stroke-width="1"/></svg>
<svg class="b" style="left:1015px;top:758px" width="7" height="7"><path d="M7 7 H0 A7 7 0 0 0 7 0 Z" fill="#e4e4e4"/><path d="M6.5 0 A6.5 6.5 0 0 1 0 6.5" fill="none" stroke="#a8a8a8" stroke-width="1"/></svg>
</body></html>
